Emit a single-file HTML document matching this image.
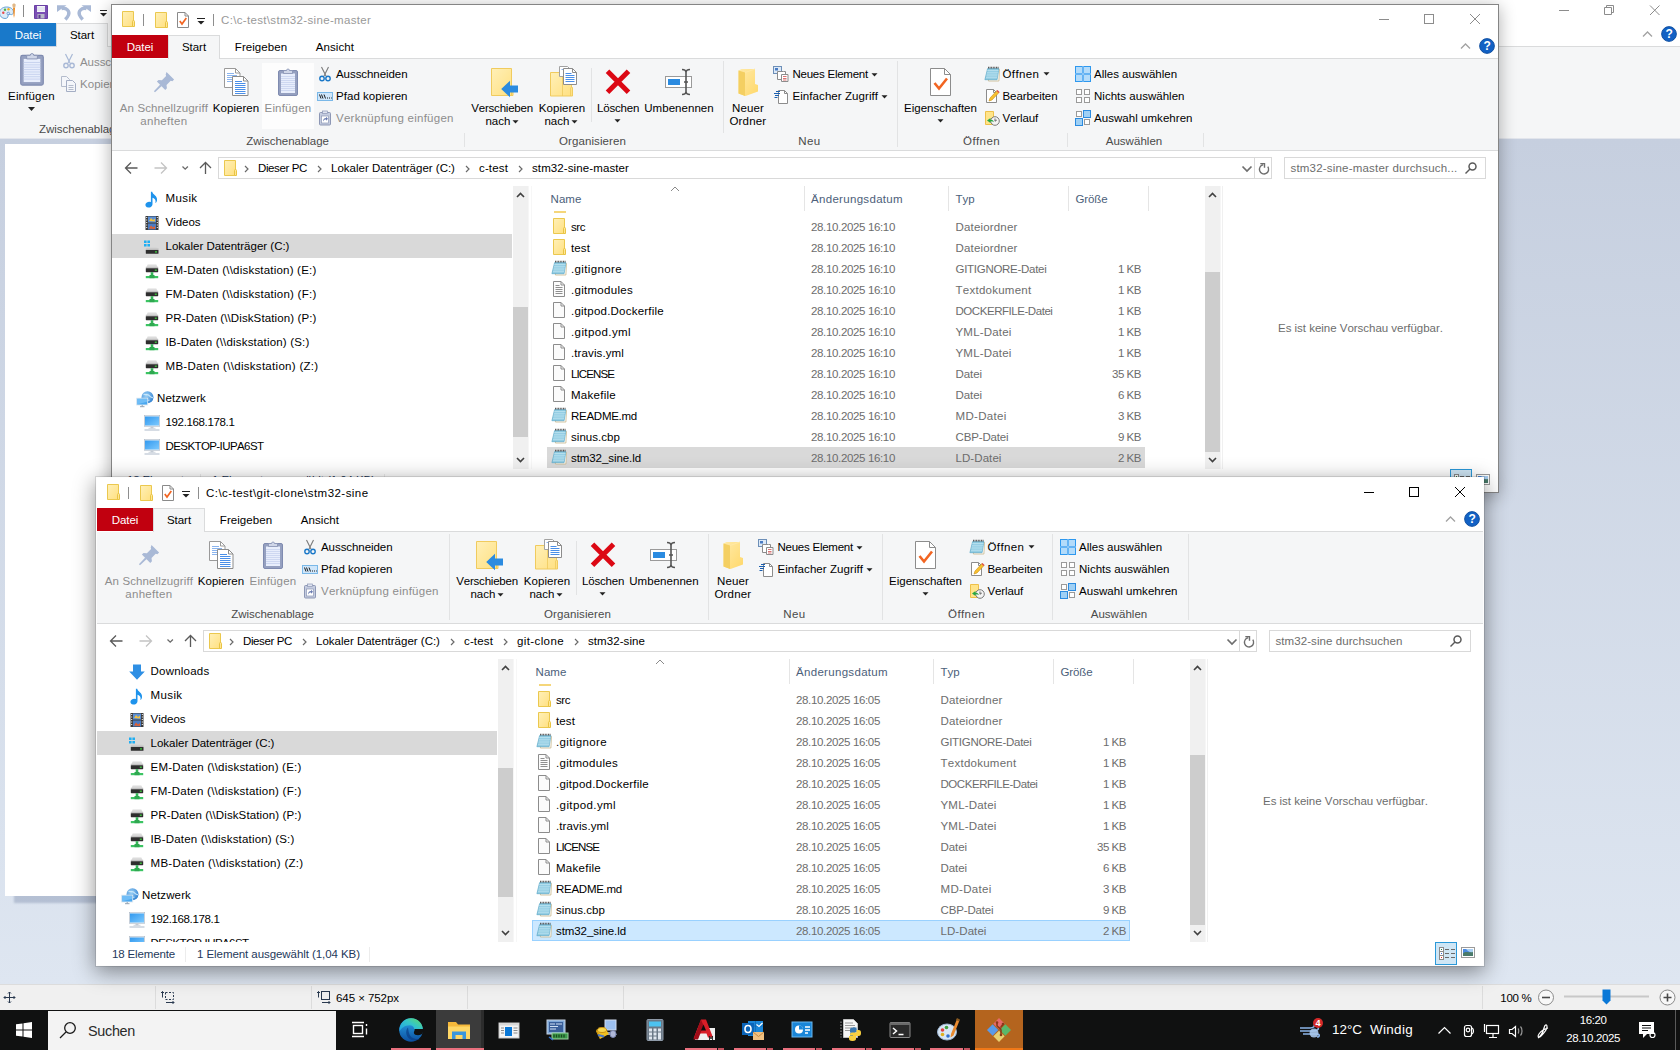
<!DOCTYPE html>
<html lang="de"><head><meta charset="utf-8"><title>Explorer</title><style>*{box-sizing:border-box;margin:0;padding:0}
html,body{width:1680px;height:1050px;overflow:hidden}
body{position:relative;font-family:"Liberation Sans",sans-serif;font-size:12px;font-kerning:none;background:#c9d2e2}
.a{position:absolute;display:block}
.t{position:absolute;white-space:pre;display:block}
.win{position:absolute;width:1388px;height:489px;background:#fff;border:1px solid #999;overflow:hidden}
svg{overflow:visible}
</style></head><body>
<svg width="0" height="0" style="position:absolute"><defs><linearGradient id="gfo" x1="0" y1="0" x2="1" y2="1"><stop offset="0" stop-color="#fff0b8"/><stop offset="1" stop-color="#ffe080"/></linearGradient><radialGradient id="gnet" cx=".4" cy=".35" r=".7"><stop offset="0" stop-color="#9fd4f8"/><stop offset="1" stop-color="#2f7fd0"/></radialGradient><linearGradient id="gpc" x1="0" y1="0" x2="1" y2="1"><stop offset="0" stop-color="#2f97ee"/><stop offset="1" stop-color="#7fcbff"/></linearGradient><linearGradient id="gnf" x1="0" y1="0" x2="1" y2="1"><stop offset="0" stop-color="#ffeaa8"/><stop offset="1" stop-color="#ffd86a"/></linearGradient></defs></svg>
<div class="a" style="left:0px;top:0px;width:1680px;height:46px;background:#fff;"></div>
<svg class="a" style="left:0;top:2px" width="112" height="20"><path d="M6.500 5c4 0 7 2 7 5 0 2-1.500 3-3 2.500-1.500-.5-2.500 0-2.500 1.500s-1 2.500-3 2.500c-3 0-5.500-2.500-5.500-5.500 0-3.500 3-6 7-6z" fill="#dcebf7" stroke="#5a9bd0" stroke-width=".9"/><circle cx="3.300" cy="10.800" r="1.200" fill="#e84a4a"/><circle cx="5" cy="7.800" r="1.200" fill="#4ab04a"/><circle cx="8.500" cy="7.300" r="1.200" fill="#f0b020"/><circle cx="8.300" cy="11.500" r="1.300" fill="none" stroke="#5a8ad0" stroke-width=".8"/><path d="M13 5.500h2l-.5 8-.5 2.500-.5-2.500z" fill="#f08a20"/><path d="M12.300 3c0-2 3.400-2 3.400 0l-.5 2.800h-2.400z" fill="#e0b888"/><path d="M23.500 3v12" stroke="#8a8a8a"/><path d="M34.500 3.500h13v13h-13z" fill="#7b4fb5" stroke="#6a40a4"/><rect x="37" y="4" width="8" height="6" fill="#f4f4fa"/><path d="M37 6h8M37 8h8" stroke="#c8cce0" stroke-width=".7"/><rect x="37.500" y="12" width="7" height="4.500" fill="#b8b8c8"/><rect x="38.500" y="12.800" width="2" height="3.500" fill="#5b3a90"/><path d="M57 3.300h9.500l-9.500 6.700z" fill="#a9b9d6"/><path d="M61.500 6.500c5-1 8.500 2.500 7 6.500-.7 1.800-1.800 3-3.200 4.500" fill="none" stroke="#a9b9d6" stroke-width="3.400"/><path d="M91 3.300h-9.500l9.500 6.700z" fill="#a9b9d6"/><path d="M86.500 6.500c-5-1-8.500 2.500-7 6.500 .7 1.800 1.800 3 3.200 4.500" fill="none" stroke="#a9b9d6" stroke-width="3.400"/><path d="M100 8.500h7" stroke="#222"/><path d="M100 11h7l-3.500 3.500z" fill="#222"/></svg>
<svg class="a" style="left:1555px;top:2px" width="112" height="18" fill="none" stroke="#8c8c8c" stroke-width="1"><path d="M4 8.500h10"/><path d="M49.500 5.500h7v7h-7zM51.500 5.500v-2h7v7h-2"/><path d="M95 3.500l9.500 9.500M104.500 3.500l-9.500 9.500"/></svg>
<svg class="a" style="left:1641.500px;top:30px" width="11" height="8"><path d="M1 6.500l4.500-4.500 4.500 4.500" fill="none" stroke="#a2a2a2" stroke-width="1.300"/></svg>
<svg class="a" style="left:1660.5px;top:26px;" width="16" height="16" viewBox="0 0 18 18"><circle cx="9" cy="9" r="8.300" fill="#1261c4" stroke="#0b4a9c"/></svg>
<span class="t" style="top:26px;line-height:16px;font-size:12px;color:#fff;letter-spacing:-0.674px;font-weight:700;left:1468.84px;width:400px;text-align:center;">?</span>
<div class="a" style="left:0px;top:23px;width:56px;height:23px;background:#1979ca;"></div>
<span class="t" style="top:27px;line-height:16px;font-size:11.52px;color:#fff;letter-spacing:-0.069px;left:-171.966px;width:400px;text-align:center;">Datei</span>
<div class="a" style="left:107px;top:46px;width:1573px;height:1px;background:#dadbdc;"></div>
<div class="a" style="left:56px;top:23px;width:52px;height:24px;background:#f5f6f7;border:1px solid #dadbdc;border-bottom:none;"></div>
<span class="t" style="top:27px;line-height:16px;font-size:11.52px;color:#000;letter-spacing:-0.056px;left:-117.972px;width:400px;text-align:center;">Start</span>
<div class="a" style="left:0px;top:47px;width:1680px;height:91px;background:#f5f6f7;"></div>
<div class="a" style="left:0px;top:138px;width:1680px;height:1px;background:#e2e5ec;"></div>
<svg class="a" style="left:12.5px;top:49.5px;" width="38" height="38" viewBox="0 0 32 32"><rect x="6.500" y="4.500" width="19" height="25" rx="1.500" fill="#95a0c0" stroke="#7f8bb0"/><rect x="9" y="7.500" width="14" height="19.500" fill="#e8eefc"/><path d="M9 10.500h14M9 12.500h14M9 14.500h14M9 16.500h14M9 18.500h14M9 20.500h14M9 22.500h14M9 24.500h14" stroke="#c6d2ee" stroke-width=".8"/><path d="M11.500 7.500v-3h3a1.500 1.500 0 0 1 3 0h3v3z" fill="#cfd6e8" stroke="#8893b4" stroke-width=".8"/></svg>
<span class="t" style="top:88px;line-height:16px;font-size:11.52px;color:#000;letter-spacing:0.165px;left:-168.583px;width:400px;text-align:center;">Einfügen</span>
<svg class="a" style="left:28px;top:106.500px" width="7" height="4"><path d="M0 0h7l-3.500 4z" fill="#222"/></svg>
<svg class="a" style="left:61px;top:53px" width="16" height="16"><path d="M4.500 1l4.500 9M11.500 1l-4.500 9" stroke="#a9b9d6" stroke-width="1.200" fill="none"/><circle cx="5" cy="12.500" r="2.200" fill="none" stroke="#a9b9d6" stroke-width="1.400"/><circle cx="11" cy="12.500" r="2.200" fill="none" stroke="#a9b9d6" stroke-width="1.400"/></svg>
<span class="t" style="top:54px;line-height:16px;font-size:11.52px;color:#8d8d8d;letter-spacing:-0.068px;left:80px;">Ausschneiden</span>
<svg class="a" style="left:60px;top:75px" width="17" height="17"><path d="M1.500 1.500h5l3 3v7h-8z" fill="#f4f6fa" stroke="#b4bccc"/><path d="M6.500 5.500h6l3 3v8h-9z" fill="#f4f6fa" stroke="#a4aec4"/><path d="M8.500 10.500h5M8.500 12.500h5M8.500 14.500h5" stroke="#b4bccc"/></svg>
<span class="t" style="top:76px;line-height:16px;font-size:11.52px;color:#8d8d8d;letter-spacing:0.023px;left:80px;">Kopieren</span>
<span class="t" style="top:121px;line-height:16px;font-size:11.52px;color:#4a4a4a;letter-spacing:-0.032px;left:39px;">Zwischenablage</span>
<div class="a" style="left:0px;top:139px;width:1680px;height:846px;background:linear-gradient(#c6cfdf,#dee6f1);"></div>
<div class="a" style="left:5px;top:144px;width:645px;height:752px;background:#fff;box-shadow:9px 7px 2px 0 rgba(70,90,130,.26);"></div>
<div class="a" style="left:0px;top:984px;width:1680px;height:26px;background:#f0f0f0;border-top:1px solid #dcdcdc;"></div>
<div class="a" style="left:155px;top:986px;width:1px;height:23px;background:#dcdcdc;"></div>
<div class="a" style="left:311px;top:986px;width:1px;height:23px;background:#dcdcdc;"></div>
<div class="a" style="left:467px;top:986px;width:1px;height:23px;background:#dcdcdc;"></div>
<div class="a" style="left:623px;top:986px;width:1px;height:23px;background:#dcdcdc;"></div>
<div class="a" style="left:1482px;top:986px;width:1px;height:23px;background:#dcdcdc;"></div>
<svg class="a" style="left:3px;top:991px" width="13" height="13" fill="none" stroke="#2a3a50" stroke-width="1"><path d="M6.500 1v11M1 6.500h11"/><path d="M5 2.500l1.500-1.500 1.500 1.500M5 10.500l1.500 1.500 1.500-1.500M2.500 5l-1.500 1.500 1.500 1.500M10.500 5l1.500 1.500-1.500 1.500"/></svg>
<svg class="a" style="left:161px;top:990px" width="15" height="14" fill="none" stroke="#2a3a50" stroke-width="1"><rect x="4.500" y="2.500" width="8" height="7" stroke-dasharray="2 1.500"/><path d="M1.500 1.500v6M5 12.500h8M0 3l1.500-1.500 1.500 1.500M11.500 11l1.500 1.500-1.500 1.500"/></svg>
<svg class="a" style="left:317px;top:990px" width="15" height="14" fill="none" stroke="#2a3a50" stroke-width="1"><rect x="4.500" y="1.500" width="8" height="8"/><path d="M1.500 1.500v6M5 12.500h8M0 3l1.500-1.500 1.500 1.500M11.500 11l1.500 1.500-1.500 1.500"/></svg>
<span class="t" style="top:990px;line-height:16px;font-size:11.52px;color:#000;letter-spacing:-0.067px;left:336px;">645 × 752px</span>
<span class="t" style="top:990px;line-height:16px;font-size:11.52px;color:#000;letter-spacing:-0.333px;left:1131.33px;width:400px;text-align:right;">100 %</span>
<svg class="a" style="left:1538px;top:988.500px" width="142" height="17" fill="none"><circle cx="8" cy="8.500" r="7.500" fill="#f8f8f8" stroke="#8a8a8a"/><path d="M4 8.500h8" stroke="#4a4a4a" stroke-width="1.600"/><path d="M26 7.500h85" stroke="#c8c8c8" stroke-width="2"/><path d="M64.500 .5h8v11l-4 4-4-4z" fill="#0a78d7"/><circle cx="129.500" cy="8.500" r="7.500" fill="#f8f8f8" stroke="#8a8a8a"/><path d="M125.500 8.500h8M129.500 4.500v8" stroke="#4a4a4a" stroke-width="1.600"/></svg>
<div class="win" id="w1" style="left:111px;top:4px;border-color:#858585;box-shadow:0 3px 16px 0 rgba(0,0,0,.32)"><svg class="a" style="left:8px;top:6px;" width="16" height="16" viewBox="0 0 16 16"><path d="M2.500 .5h11v15h-11z" fill="url(#gfo)" stroke="#ebc84e"/><path d="M12.500 15.500v-5a1 1 0 0 1 2 0v5z" fill="#ffe694" stroke="#e9c444"/></svg>
<div class="a" style="left:31px;top:8.5px;width:1px;height:12px;background:#8e8e8e;"></div>
<svg class="a" style="left:41px;top:7px;" width="16" height="16" viewBox="0 0 16 16"><path d="M2.500 .5h11v15h-11z" fill="url(#gfo)" stroke="#ebc84e"/><path d="M12.500 15.500v-5a1 1 0 0 1 2 0v5z" fill="#ffe694" stroke="#e9c444"/></svg>
<svg class="a" style="left:63px;top:7px;" width="16" height="16" viewBox="0 0 16 16"><path d="M2.5 .5h7.500l3.500 3.500v11.500h-11z" fill="#fff" stroke="#8a8a8a"/><path d="M10 .5v3.500h3.500" fill="none" stroke="#8a8a8a"/><path d="M4.800 9l2.200 3 4.300-6" fill="none" stroke="#f26522" stroke-width="1.700"/></svg>
<svg class="a" style="left:84px;top:12px" width="10" height="9"><path d="M1 1.500h8" stroke="#222" stroke-width="1"/><path d="M1.500 4h7l-3.500 3.500z" fill="#222"/></svg>
<div class="a" style="left:101px;top:8.5px;width:1px;height:12px;background:#8e8e8e;"></div>
<span class="t" style="top:7px;line-height:16px;font-size:11.52px;color:#999;letter-spacing:0.327px;left:109px;">C:\c-test\stm32-sine-master</span>
<svg class="a" style="left:1262px;top:4px" width="112" height="20" fill="none" stroke="#8c8c8c" stroke-width="1"><path d="M5 10.500h10"/><rect x="50.500" y="5.500" width="9" height="9"/><path d="M96 5l10 10M106 5l-10 10"/></svg>
<div class="a" style="left:0px;top:30px;width:56px;height:23px;background:#c1000f;"></div>
<span class="t" style="top:34px;line-height:16px;font-size:11.52px;color:#fff;letter-spacing:-0.069px;left:-171.966px;width:400px;text-align:center;">Datei</span>
<div class="a" style="left:56px;top:53px;width:1330px;height:1px;background:#dadbdc;"></div>
<div class="a" style="left:56px;top:30px;width:52px;height:24px;background:#f5f6f7;border:1px solid #dadbdc;border-bottom:none;"></div>
<span class="t" style="top:34px;line-height:16px;font-size:11.52px;color:#000;letter-spacing:-0.056px;left:-117.972px;width:400px;text-align:center;">Start</span>
<span class="t" style="top:34px;line-height:16px;font-size:11.52px;color:#000;letter-spacing:0.047px;left:-51.0237px;width:400px;text-align:center;">Freigeben</span>
<span class="t" style="top:34px;line-height:16px;font-size:11.52px;color:#000;letter-spacing:0.075px;left:22.9627px;width:400px;text-align:center;">Ansicht</span>
<svg class="a" style="left:1348px;top:37px" width="11" height="8"><path d="M1 6.500l4.500-4.500 4.500 4.500" fill="none" stroke="#a2a2a2" stroke-width="1.300"/></svg>
<svg class="a" style="left:1366.5px;top:33px;" width="16" height="16" viewBox="0 0 18 18"><circle cx="9" cy="9" r="8.300" fill="#1261c4" stroke="#0b4a9c"/></svg>
<span class="t" style="top:33px;line-height:16px;font-size:12px;color:#fff;letter-spacing:-0.674px;font-weight:700;left:1174.84px;width:400px;text-align:center;">?</span>
<div class="a" style="left:0px;top:54px;width:1386px;height:91px;background:#f5f6f7;"></div>
<div class="a" style="left:0px;top:145px;width:1386px;height:1px;background:#dadbdc;"></div>
<svg class="a" style="left:36px;top:61px;" width="32" height="32" viewBox="0 0 32 32"><g fill="#a9b9d6" transform="translate(16 16) scale(.84) translate(-16 -16)"><path d="M19 4l9 9-2 2-2-.5-5 5 .5 4-2 2-10-10 2-2 4 .5 5-5-.5-2z"/><path d="M11.500 19l1.800 1.800-8 7.500-1.300-1.300z"/></g></svg>
<span class="t" style="top:95px;line-height:16px;font-size:11.52px;color:#8d8d8d;letter-spacing:0.109px;left:-148.055px;width:400px;text-align:center;">An Schnellzugriff</span>
<span class="t" style="top:108px;line-height:16px;font-size:11.52px;color:#8d8d8d;letter-spacing:0.307px;left:-148.154px;width:400px;text-align:center;">anheften</span>
<svg class="a" style="left:108px;top:61px;" width="32" height="32" viewBox="0 0 32 32"><path d="M4.500 2.500h11l4.500 4.500v14.500h-15.500z" fill="#fff" stroke="#9a9a9a"/><path d="M15.500 2.500v4.500h4.500" fill="none" stroke="#9a9a9a"/><path d="M7 7.500h7M7 9.500h10M7 11.500h5M7 13.500h5M7 15.500h5" stroke="#8ab4ee" stroke-width="1"/><path d="M12.500 10.500h11l4.500 4.500v14.500h-15.500z" fill="#fff" stroke="#8c8c8c"/><path d="M23.500 10.500v4.500h4.500" fill="none" stroke="#8c8c8c"/><path d="M15 15.500h7M15 17.500h10.500M15 19.500h10.500M15 21.500h10.500M15 23.500h10.500M15 25.500h10.500M15 27.500h10.500" stroke="#4a8fe8" stroke-width="1"/></svg>
<span class="t" style="top:95px;line-height:16px;font-size:11.52px;color:#000;letter-spacing:0.023px;left:-76.0116px;width:400px;text-align:center;">Kopieren</span>
<div class="a" style="left:150px;top:58px;width:52px;height:66px;background:#fdfdfd;"></div>
<svg class="a" style="left:160px;top:61px;" width="32" height="32" viewBox="0 0 32 32"><rect x="6.500" y="4.500" width="19" height="25" rx="1.500" fill="#95a0c0" stroke="#7f8bb0"/><rect x="9" y="7.500" width="14" height="19.500" fill="#e8eefc"/><path d="M9 10.500h14M9 12.500h14M9 14.500h14M9 16.500h14M9 18.500h14M9 20.500h14M9 22.500h14M9 24.500h14" stroke="#c6d2ee" stroke-width=".8"/><path d="M11.500 7.500v-3h3a1.500 1.500 0 0 1 3 0h3v3z" fill="#cfd6e8" stroke="#8893b4" stroke-width=".8"/></svg>
<span class="t" style="top:95px;line-height:16px;font-size:11.52px;color:#8d8d8d;letter-spacing:0.165px;left:-24.0826px;width:400px;text-align:center;">Einfügen</span>
<svg class="a" style="left:205px;top:61px;" width="16" height="16" viewBox="0 0 16 16"><path d="M4.500 1l4.500 9M11.500 1l-4.500 9" stroke="#7a7a7a" stroke-width="1.100" fill="none"/><circle cx="5" cy="12.500" r="2.200" fill="none" stroke="#1b78c8" stroke-width="1.400"/><circle cx="11" cy="12.500" r="2.200" fill="none" stroke="#1b78c8" stroke-width="1.400"/></svg>
<span class="t" style="top:61px;line-height:16px;font-size:11.52px;color:#000;letter-spacing:-0.068px;left:224px;">Ausschneiden</span>
<svg class="a" style="left:205px;top:83px;" width="16" height="16" viewBox="0 0 16 16"><rect x=".5" y="4.500" width="15" height="8" fill="#cfe6fa" stroke="#7ab8e8"/><path d="M2.500 6.500l1.500 4M4.500 6.500l1.500 4M7 6.500l1.500 4" stroke="#1a1a1a" stroke-width="1"/><path d="M10 10h1M12 10h1M14 10h.8" stroke="#1a1a1a" stroke-width="1.200"/></svg>
<span class="t" style="top:83px;line-height:16px;font-size:11.52px;color:#000;letter-spacing:0.035px;left:224px;">Pfad kopieren</span>
<svg class="a" style="left:205px;top:105px;" width="16" height="16" viewBox="0 0 16 16"><rect x="2.500" y="2.500" width="11" height="12.500" rx="1" fill="#c5cde0" stroke="#8d97b5"/><rect x="5.500" y="1" width="5" height="2.500" fill="#dfe4f0" stroke="#8d97b5" stroke-width=".7"/><rect x="4.500" y="6" width="7" height="7" fill="#fff" stroke="#8d97b5" stroke-width=".7"/><path d="M6 11.500c0-2.500 1.500-3.500 3-3.500v-1.200l2 2-2 2v-1.200c-1 0-2 .3-3 1.900z" fill="#6a7cb0"/></svg>
<span class="t" style="top:105px;line-height:16px;font-size:11.52px;color:#8d8d8d;letter-spacing:0.253px;left:224px;">Verknüpfung einfügen</span>
<span class="t" style="top:128px;line-height:16px;font-size:11.52px;color:#4a4a4a;letter-spacing:-0.032px;left:-24.4839px;width:400px;text-align:center;">Zwischenablage</span>
<div class="a" style="left:352px;top:128px;width:1px;height:14px;background:#e2e3e4;"></div>
<svg class="a" style="left:375.5px;top:61px;" width="32" height="32" viewBox="0 0 32 32"><path d="M3.500 2.500h20v19h1.500v8h-21.500z" fill="url(#gfo)" stroke="#f0cb5e"/><path d="M23.500 21.500v8" stroke="#f0c95a"/><path d="M13.200 23l8.800-8.200v4.700h8v7h-8v4.700z" fill="#2b8be0"/></svg>
<span class="t" style="top:95px;line-height:16px;font-size:11.52px;color:#000;letter-spacing:-0.226px;left:190.113px;width:400px;text-align:center;">Verschieben</span>
<span class="t" style="top:108px;line-height:16px;font-size:11.52px;color:#000;letter-spacing:-0.045px;left:373.5px;">nach</span>
<svg class="a" style="left:400px;top:114.5px" width="7" height="4"><path d="M.5 .3h6l-3 3.200z" fill="#222"/></svg>
<svg class="a" style="left:434px;top:61px;" width="32" height="32" viewBox="0 0 32 32"><path d="M4.500 6.500h21v15h1v8.500h-22z" fill="url(#gfo)" stroke="#f0cb5e"/><path d="M16.500 6.500v23.500M24.500 21.500v8.500" stroke="#f0cb5e" opacity=".8"/><path d="M13.500 .5h8l3 3v7h-11z" fill="#fff" stroke="#a2a2a2"/><path d="M15.500 3.500h4" stroke="#8ab4ee"/><path d="M17.500 2.500h9l4 4v12h-13z" fill="#fff" stroke="#8c8c8c"/><path d="M26.500 2.500v4h4" fill="none" stroke="#8c8c8c"/><path d="M19.500 7.500h6M19.500 9.500h9M19.500 11.500h9M19.500 13.500h9M19.500 15.500h9" stroke="#4a8fe8" stroke-width="1"/></svg>
<span class="t" style="top:95px;line-height:16px;font-size:11.52px;color:#000;letter-spacing:0.023px;left:249.988px;width:400px;text-align:center;">Kopieren</span>
<span class="t" style="top:108px;line-height:16px;font-size:11.52px;color:#000;letter-spacing:-0.045px;left:432.5px;">nach</span>
<svg class="a" style="left:459px;top:114.5px" width="7" height="4"><path d="M.5 .3h6l-3 3.200z" fill="#222"/></svg>
<div class="a" style="left:479px;top:63px;width:1px;height:54px;background:#e2e3e4;"></div>
<svg class="a" style="left:490px;top:61px;" width="32" height="32" viewBox="0 0 32 32"><path d="M5.500 5.200l21 21M26.500 5.200l-21 21" stroke="#dc0814" stroke-width="5" fill="none"/></svg>
<span class="t" style="top:95px;line-height:16px;font-size:11.52px;color:#000;letter-spacing:-0.215px;left:306.107px;width:400px;text-align:center;">Löschen</span>
<svg class="a" style="left:502px;top:114px" width="7" height="4"><path d="M.5 .3h6l-3 3.200z" fill="#222"/></svg>
<svg class="a" style="left:551px;top:61px;" width="32" height="32" viewBox="0 0 32 32"><rect x="2.500" y="10.500" width="26" height="11" fill="#fff" stroke="#9a9a9a"/><rect x="5" y="13" width="12" height="6" fill="#2b8be0"/><path d="M19 3.500c3 0 4 1 4 3v19c0 2-1 3-4 3M27 3.500c-3 0-4 1-4 3v19c0 2 1 3 4 3M21 16h4" stroke="#555" stroke-width="1.600" fill="none"/></svg>
<span class="t" style="top:95px;line-height:16px;font-size:11.52px;color:#000;letter-spacing:0.038px;left:366.981px;width:400px;text-align:center;">Umbenennen</span>
<span class="t" style="top:128px;line-height:16px;font-size:11.52px;color:#4a4a4a;letter-spacing:0.087px;left:280.456px;width:400px;text-align:center;">Organisieren</span>
<div class="a" style="left:611px;top:56px;width:1px;height:72px;background:#e2e3e4;"></div>
<svg class="a" style="left:620px;top:61px;" width="32" height="32" viewBox="0 0 32 32"><path d="M6.500 4.500l3-1.500h13.500v15l3 1v6.500l-12.500 4.500-7-2.500z" fill="url(#gnf)"/><path d="M6.500 4.500l6.500 2v23.500l-6.500-2.500z" fill="#f4cf62"/><path d="M13 6.500l10-3.500" stroke="#ffe9a6" fill="none"/></svg>
<span class="t" style="top:95px;line-height:16px;font-size:11.52px;color:#000;letter-spacing:0.125px;left:435.938px;width:400px;text-align:center;">Neuer</span>
<span class="t" style="top:108px;line-height:16px;font-size:11.52px;color:#000;letter-spacing:0.191px;left:435.904px;width:400px;text-align:center;">Ordner</span>
<svg class="a" style="left:661px;top:61px;" width="16" height="16" viewBox="0 0 16 16"><rect x=".5" y=".5" width="8" height="7" fill="#dce9f7" stroke="#6d8fb8"/><rect x="2" y="2" width="3" height="2.500" fill="#4a7cc4"/><path d="M4.500 5.500h6l2 0v8h-8z" fill="#fff" stroke="#8c8c8c"/><path d="M8.500 8.500h6.500v7h-6.500z" fill="#fff" stroke="#8c8c8c"/><path d="M10 10.500h3.500M10 12.500h3.500M10 14h3.500" stroke="#d05050" stroke-width=".8"/></svg>
<span class="t" style="top:61px;line-height:16px;font-size:11.52px;color:#000;letter-spacing:-0.251px;left:680.5px;">Neues Element</span>
<svg class="a" style="left:759px;top:67.5px" width="7" height="4"><path d="M.5 .3h6l-3 3.200z" fill="#222"/></svg>
<svg class="a" style="left:661px;top:83px;" width="16" height="16" viewBox="0 0 16 16"><path d="M5.500 2.500h6l3 3v10h-9z" fill="#fff" stroke="#8c8c8c"/><path d="M11.500 2.500v3h3" fill="none" stroke="#8c8c8c"/><path d="M1 5.500h6M2 7.500h4M3 3.500h4M1.500 9.500h3" stroke="#1b5fb0" stroke-width="1"/></svg>
<span class="t" style="top:83px;line-height:16px;font-size:11.52px;color:#000;letter-spacing:0.064px;left:680.5px;">Einfacher Zugriff</span>
<svg class="a" style="left:768.5px;top:89.5px" width="7" height="4"><path d="M.5 .3h6l-3 3.200z" fill="#222"/></svg>
<span class="t" style="top:128px;line-height:16px;font-size:11.52px;color:#4a4a4a;letter-spacing:0.289px;left:497.356px;width:400px;text-align:center;">Neu</span>
<div class="a" style="left:785px;top:56px;width:1px;height:86px;background:#e2e3e4;"></div>
<svg class="a" style="left:811.5px;top:61px;" width="32" height="32" viewBox="0 0 32 32"><path d="M6.500 2.500h14l6 6v21h-20z" fill="#fff" stroke="#8c8c8c"/><path d="M20.500 2.500v6h6" fill="none" stroke="#8c8c8c"/><path d="M10.500 17l4.500 5.500 8-10" fill="none" stroke="#f26522" stroke-width="2.600"/></svg>
<span class="t" style="top:95px;line-height:16px;font-size:11.52px;color:#000;letter-spacing:-0.016px;left:628.508px;width:400px;text-align:center;">Eigenschaften</span>
<svg class="a" style="left:825px;top:114px" width="7" height="4"><path d="M.5 .3h6l-3 3.200z" fill="#222"/></svg>
<svg class="a" style="left:871.5px;top:61px;" width="16" height="16" viewBox="0 0 16 16"><path d="M5.200 3.500h10.300l-.6 11.500h-10.500z" fill="#fdfdfd" stroke="#c9b78c" stroke-width=".8"/><path d="M3.600 2.600h11.300l-1.800 11.100h-12.200z" fill="#8ecbe2"/><path d="M3.600 2.600h11.300l-1.800 11.100h-12.200z" fill="none" stroke="#5fa9c8" stroke-width=".7"/><path d="M3.300 4.500h11.200M3 6.300h11.200M2.600 8.100h11.200M2.300 9.900h11.200M2 11.700h11.200" stroke="#c4e6f2" stroke-width=".7"/><path d="M4 1.700h10.600" stroke="#4a4a4a" stroke-width="1.700" stroke-dasharray=".9 .7"/></svg>
<span class="t" style="top:61px;line-height:16px;font-size:11.52px;color:#000;letter-spacing:0.386px;left:890.5px;">Öffnen</span>
<svg class="a" style="left:931px;top:67px" width="7" height="4"><path d="M.5 .3h6l-3 3.200z" fill="#222"/></svg>
<svg class="a" style="left:872px;top:83px;" width="16" height="16" viewBox="0 0 16 16"><path d="M2.500 1.500h7l3 3v10h-10z" fill="#fff" stroke="#8c8c8c"/><path d="M9.500 1.500v3h3" fill="none" stroke="#8c8c8c"/><path d="M5 13l1-3 7-7.500 2 2-7 7.500z" fill="#f8c030" stroke="#c89018" stroke-width=".6"/><path d="M13 2.500l2 2" stroke="#e05050" stroke-width="1.500"/></svg>
<span class="t" style="top:83px;line-height:16px;font-size:11.52px;color:#000;letter-spacing:-0.072px;left:890.5px;">Bearbeiten</span>
<svg class="a" style="left:872px;top:105px;" width="16" height="16" viewBox="0 0 16 16"><path d="M1.500 1.500h8v9h1v4h-9z" fill="#ffe48a" stroke="#eec04a"/><circle cx="11" cy="11" r="4.300" fill="#f4f4f4" stroke="#7a7a7a"/><path d="M11 8.500v2.700l1.800-1.200" stroke="#555" fill="none" stroke-width=".9"/><path d="M3 10.500l3.500-2.500v1.800c2 0 3 .8 3.500 2.500-1-.8-2-1-3.500-1v1.700z" fill="#28a745"/></svg>
<span class="t" style="top:105px;line-height:16px;font-size:11.52px;color:#000;letter-spacing:-0.143px;left:890.5px;">Verlauf</span>
<span class="t" style="top:128px;line-height:16px;font-size:11.52px;color:#4a4a4a;letter-spacing:0.386px;left:669.557px;width:400px;text-align:center;">Öffnen</span>
<div class="a" style="left:955px;top:128px;width:1px;height:14px;background:#e2e3e4;"></div>
<svg class="a" style="left:963px;top:61px;" width="16" height="16" viewBox="0 0 16 16"><g fill="#b3dbfa" stroke="#2d98ef"><rect x=".5" y=".5" width="7" height="7"/><rect x="8.500" y=".5" width="7" height="7"/><rect x=".5" y="8.500" width="7" height="7"/><rect x="8.500" y="8.500" width="7" height="7"/></g><path d="M8 0v16M0 8h16" stroke="#e8f4fe" stroke-width=".6"/></svg>
<span class="t" style="top:61px;line-height:16px;font-size:11.52px;color:#000;letter-spacing:-0.013px;left:982px;">Alles auswählen</span>
<svg class="a" style="left:963px;top:83px;" width="16" height="16" viewBox="0 0 16 16"><g fill="#fff" stroke="#9a9a9a"><rect x="1.500" y="1.500" width="5" height="5"/><rect x="9.500" y="1.500" width="5" height="5"/><rect x="1.500" y="9.500" width="5" height="5"/><rect x="9.500" y="9.500" width="5" height="5"/></g></svg>
<span class="t" style="top:83px;line-height:16px;font-size:11.52px;color:#000;letter-spacing:0.016px;left:982px;">Nichts auswählen</span>
<svg class="a" style="left:963px;top:105px;" width="16" height="16" viewBox="0 0 16 16"><g stroke="#9a9a9a" fill="#fff"><rect x="1.500" y="1.500" width="5" height="5"/><rect x="9.500" y="9.500" width="5" height="5"/></g><g fill="#9fd0f5" stroke="#2b8be0"><rect x="8.500" y=".5" width="7" height="7"/><rect x=".5" y="8.500" width="7" height="7"/></g></svg>
<span class="t" style="top:105px;line-height:16px;font-size:11.52px;color:#000;letter-spacing:0.036px;left:982px;">Auswahl umkehren</span>
<span class="t" style="top:128px;line-height:16px;font-size:11.52px;color:#4a4a4a;letter-spacing:0.021px;left:821.989px;width:400px;text-align:center;">Auswählen</span>
<div class="a" style="left:1091px;top:128px;width:1px;height:14px;background:#e2e3e4;"></div>
<svg class="a" style="left:12px;top:156px" width="90" height="14" fill="none" stroke-width="1.300"><path d="M1.500 7h12M7 1.500l-5.500 5.500 5.500 5.500" stroke="#5a5a5a"/><path d="M30.500 7h12M37 1.500l5.500 5.500-5.500 5.500" stroke="#c4c4c4"/><path d="M58.500 5.500l2.700 2.700 2.700-2.700" stroke="#6a6a6a"/><path d="M81.500 13v-11.500M76 7l5.500-5.500 5.500 5.500" stroke="#5a5a5a"/></svg>
<div class="a" style="left:106px;top:152px;width:1037px;height:22px;background:#fff;border:1px solid #d9d9d9;"></div>
<div class="a" style="left:1142px;top:152px;width:18px;height:22px;background:#fff;border:1px solid #d9d9d9;"></div>
<svg class="a" style="left:109.5px;top:154.5px;" width="16" height="16" viewBox="0 0 16 16"><path d="M2.500 .5h11v15h-11z" fill="url(#gfo)" stroke="#ebc84e"/><path d="M12.500 15.500v-5a1 1 0 0 1 2 0v5z" fill="#ffe694" stroke="#e9c444"/></svg>
<svg class="a" style="left:131.5px;top:159.5px" width="6" height="8"><path d="M1 1l3 3-3 3" fill="none" stroke="#6a6a6a" stroke-width="1.200"/></svg>
<span class="t" style="top:155px;line-height:16px;font-size:11.52px;color:#000;letter-spacing:-0.388px;left:146px;">Dieser PC</span>
<svg class="a" style="left:204.5px;top:159.5px" width="6" height="8"><path d="M1 1l3 3-3 3" fill="none" stroke="#6a6a6a" stroke-width="1.200"/></svg>
<span class="t" style="top:155px;line-height:16px;font-size:11.52px;color:#000;letter-spacing:-0.009px;left:219px;">Lokaler Datenträger (C:)</span>
<svg class="a" style="left:352.5px;top:159.5px" width="6" height="8"><path d="M1 1l3 3-3 3" fill="none" stroke="#6a6a6a" stroke-width="1.200"/></svg>
<span class="t" style="top:155px;line-height:16px;font-size:11.52px;color:#000;letter-spacing:0.139px;left:367px;">c-test</span>
<svg class="a" style="left:405.5px;top:159.5px" width="6" height="8"><path d="M1 1l3 3-3 3" fill="none" stroke="#6a6a6a" stroke-width="1.200"/></svg>
<span class="t" style="top:155px;line-height:16px;font-size:11.52px;color:#000;letter-spacing:0.095px;left:420px;">stm32-sine-master</span>
<svg class="a" style="left:1129px;top:159px" width="12" height="9"><path d="M1.500 2.500l4.500 4.500 4.500-4.500" fill="none" stroke="#6e6e6e" stroke-width="1.700"/></svg>
<svg class="a" style="left:1144px;top:156px" width="16" height="16" fill="none" stroke="#6e6e6e" stroke-width="1.400"><path d="M11.800 5.700A4.600 4.600 0 1 1 7.200 3.800"/><path d="M4.300 2.600h4.200v4.100"/></svg>
<div class="a" style="left:1172px;top:152px;width:202px;height:22px;background:#fff;border:1px solid #d9d9d9;"></div>
<span class="t" style="top:155px;line-height:16px;font-size:11.52px;color:#6d6d6d;letter-spacing:0.189px;left:1178.5px;">stm32-sine-master durchsuch...</span>
<svg class="a" style="left:1352px;top:156px" width="14" height="14" fill="none" stroke="#5a5a5a" stroke-width="1.500"><circle cx="8.500" cy="5.500" r="3.500"/><path d="M6 8l-4.500 4.500"/></svg>
<div class="a" style="left:0;top:181px;width:401px;height:283px;overflow:hidden"><div class="a" style="left:0;top:-181px">
<svg class="a" style="left:32px;top:185.5px;" width="16" height="16" viewBox="0 0 16 16"><path d="M8.200 .8c.5 3 5.500 3.800 4.800 8.600-.3 1.400-1 2.200-1.700 2.700 1-2.900-.6-4.800-2.800-5.300v6.500a3.600 2.900 -15 1 1-1.600-2.300v-10.200z" fill="#1e93ec"/></svg>
<span class="t" style="top:185px;line-height:16px;font-size:11.52px;color:#000;letter-spacing:0.384px;left:53.5px;">Musik</span>
<svg class="a" style="left:32px;top:209.5px;" width="16" height="16" viewBox="0 0 16 16"><rect x="1.5" y="1" width="13" height="14" fill="#3a3a3a"/><rect x="4" y="1.500" width="8" height="6" fill="#5b8fd6"/><rect x="4" y="8.500" width="8" height="6" fill="#4a7cc4"/><path d="M5 6l2-3 2 2 2-1.500v3z" fill="#f0c040"/><path d="M5 13.500l2-3 2 2 2-1.500v3z" fill="#e06030"/><path d="M2.200 2.500h1M2.200 5h1M2.200 7.500h1M2.200 10h1M2.200 12.500h1M12.800 2.500h1M12.800 5h1M12.800 7.500h1M12.800 10h1M12.800 12.500h1" stroke="#fff" stroke-width="1.200"/></svg>
<span class="t" style="top:209px;line-height:16px;font-size:11.52px;color:#000;letter-spacing:-0.037px;left:53.5px;">Videos</span>
<div class="a" style="left:0px;top:229px;width:400px;height:24px;background:#d9d9d9;"></div>
<svg class="a" style="left:32px;top:233.5px;" width="16" height="16" viewBox="0 0 16 16"><path d="M2.500 9.500l1-1.500h9l1 1.500z" fill="#d5d5d5"/><rect x="1.800" y="9.500" width="12.700" height="2" fill="#bdbdbd"/><rect x="1.800" y="11" width="12.700" height="3.800" rx=".6" fill="#2e2e2e"/><rect x="11" y="12.300" width="2" height="1.200" fill="#3fdc3f"/><path d="M0 1.500h2.600v2.600h-2.600zM3.400 1.500h2.600v2.600h-2.600zM0 4.900h2.600v2.600h-2.600zM3.400 4.900h2.600v2.600h-2.600z" fill="#20aef2"/></svg>
<span class="t" style="top:233px;line-height:16px;font-size:11.52px;color:#000;letter-spacing:-0.009px;left:53.5px;">Lokaler Datenträger (C:)</span>
<svg class="a" style="left:32px;top:257.5px;" width="16" height="16" viewBox="0 0 16 16"><path d="M2.500 4l1.200-2.500h8.600l1.200 2.500z" fill="#dcdcdc"/><rect x="1.800" y="3.800" width="12.400" height="1.800" fill="#c2c2c2"/><rect x="1.800" y="5.200" width="12.400" height="4" rx=".6" fill="#2e2e2e"/><rect x="10.800" y="6.600" width="2" height="1.200" fill="#3fdc3f"/><path d="M6.700 9.200h2.600v3h-2.600z" fill="#35b558"/><path d="M1.800 13h12.400v2.200h-12.400z" fill="#3cc463"/><path d="M5.500 12h5v3.200h-5z" fill="#2fa850"/></svg>
<span class="t" style="top:257px;line-height:16px;font-size:11.52px;color:#000;letter-spacing:0.196px;left:53.5px;">EM-Daten (\\diskstation) (E:)</span>
<svg class="a" style="left:32px;top:281.5px;" width="16" height="16" viewBox="0 0 16 16"><path d="M2.500 4l1.200-2.500h8.600l1.200 2.500z" fill="#dcdcdc"/><rect x="1.800" y="3.800" width="12.400" height="1.800" fill="#c2c2c2"/><rect x="1.800" y="5.200" width="12.400" height="4" rx=".6" fill="#2e2e2e"/><rect x="10.800" y="6.600" width="2" height="1.200" fill="#3fdc3f"/><path d="M6.700 9.200h2.600v3h-2.600z" fill="#35b558"/><path d="M1.800 13h12.400v2.200h-12.400z" fill="#3cc463"/><path d="M5.500 12h5v3.200h-5z" fill="#2fa850"/></svg>
<span class="t" style="top:281px;line-height:16px;font-size:11.52px;color:#000;letter-spacing:0.241px;left:53.5px;">FM-Daten (\\diskstation) (F:)</span>
<svg class="a" style="left:32px;top:305.5px;" width="16" height="16" viewBox="0 0 16 16"><path d="M2.500 4l1.200-2.500h8.600l1.200 2.500z" fill="#dcdcdc"/><rect x="1.800" y="3.800" width="12.400" height="1.800" fill="#c2c2c2"/><rect x="1.800" y="5.200" width="12.400" height="4" rx=".6" fill="#2e2e2e"/><rect x="10.800" y="6.600" width="2" height="1.200" fill="#3fdc3f"/><path d="M6.700 9.200h2.600v3h-2.600z" fill="#35b558"/><path d="M1.800 13h12.400v2.200h-12.400z" fill="#3cc463"/><path d="M5.500 12h5v3.200h-5z" fill="#2fa850"/></svg>
<span class="t" style="top:305px;line-height:16px;font-size:11.52px;color:#000;letter-spacing:0.108px;left:53.5px;">PR-Daten (\\DiskStation) (P:)</span>
<svg class="a" style="left:32px;top:329.5px;" width="16" height="16" viewBox="0 0 16 16"><path d="M2.500 4l1.200-2.500h8.600l1.200 2.500z" fill="#dcdcdc"/><rect x="1.800" y="3.800" width="12.400" height="1.800" fill="#c2c2c2"/><rect x="1.800" y="5.200" width="12.400" height="4" rx=".6" fill="#2e2e2e"/><rect x="10.800" y="6.600" width="2" height="1.200" fill="#3fdc3f"/><path d="M6.700 9.200h2.600v3h-2.600z" fill="#35b558"/><path d="M1.800 13h12.400v2.200h-12.400z" fill="#3cc463"/><path d="M5.500 12h5v3.200h-5z" fill="#2fa850"/></svg>
<span class="t" style="top:329px;line-height:16px;font-size:11.52px;color:#000;letter-spacing:0.175px;left:53.5px;">IB-Daten (\\diskstation) (S:)</span>
<svg class="a" style="left:32px;top:353.5px;" width="16" height="16" viewBox="0 0 16 16"><path d="M2.500 4l1.200-2.500h8.600l1.200 2.500z" fill="#dcdcdc"/><rect x="1.800" y="3.800" width="12.400" height="1.800" fill="#c2c2c2"/><rect x="1.800" y="5.200" width="12.400" height="4" rx=".6" fill="#2e2e2e"/><rect x="10.800" y="6.600" width="2" height="1.200" fill="#3fdc3f"/><path d="M6.700 9.200h2.600v3h-2.600z" fill="#35b558"/><path d="M1.800 13h12.400v2.200h-12.400z" fill="#3cc463"/><path d="M5.500 12h5v3.200h-5z" fill="#2fa850"/></svg>
<span class="t" style="top:353px;line-height:16px;font-size:11.52px;color:#000;letter-spacing:0.287px;left:53.5px;">MB-Daten (\\diskstation) (Z:)</span>
<svg class="a" style="left:23.5px;top:385.5px;" width="18" height="16" viewBox="0 0 18 16"><circle cx="11.500" cy="6.200" r="6" fill="url(#gnet)"/><path d="M7.500 3c2 1.500 3.500 0 5 1s2.500 3 4.500 2.500M8 9c2-1 3.500 1 5.500 0" stroke="#d4ecfb" fill="none" stroke-width="1.200" opacity=".85"/><rect x=".7" y="7.200" width="11" height="6.800" fill="#4aa8f0" stroke="#dfe8f0" stroke-width=".9"/><path d="M1.200 7.700h10v3l-10 2.500z" fill="#7fc6fa" opacity=".7"/><path d="M4 15.700h4.500M6.200 14v1.700" stroke="#93a3b3" stroke-width="1"/></svg>
<span class="t" style="top:385px;line-height:16px;font-size:11.52px;color:#000;letter-spacing:0.124px;left:45px;">Netzwerk</span>
<svg class="a" style="left:32px;top:409.5px;" width="16" height="16" viewBox="0 0 16 16"><rect x=".5" y="1" width="15" height="10" fill="url(#gpc)" stroke="#e4eaf0"/><rect x=".2" y=".7" width="15.600" height="10.600" fill="none" stroke="#9aa8b8" stroke-width=".4"/><path d="M6.500 11.500h3v1.800h-3z" fill="#c4ccd6"/><path d="M4.500 13.300h7" stroke="#c4ccd6" stroke-width=".8"/><path d="M.5 15h15" stroke="#b4c0ce" stroke-width="1.100"/></svg>
<span class="t" style="top:409px;line-height:16px;font-size:11.52px;color:#000;letter-spacing:-0.359px;left:53.5px;">192.168.178.1</span>
<svg class="a" style="left:32px;top:433.5px;" width="16" height="16" viewBox="0 0 16 16"><rect x=".5" y="1" width="15" height="10" fill="url(#gpc)" stroke="#e4eaf0"/><rect x=".2" y=".7" width="15.600" height="10.600" fill="none" stroke="#9aa8b8" stroke-width=".4"/><path d="M6.500 11.500h3v1.800h-3z" fill="#c4ccd6"/><path d="M4.500 13.300h7" stroke="#c4ccd6" stroke-width=".8"/><path d="M.5 15h15" stroke="#b4c0ce" stroke-width="1.100"/></svg>
<span class="t" style="top:433px;line-height:16px;font-size:11.52px;color:#000;letter-spacing:-0.594px;left:53.5px;">DESKTOP-IUPA6ST</span>
</div></div>
<div class="a" style="left:401px;top:181px;width:16px;height:283px;background:#f0f0f0;border-right:1px solid #f6f6f6;"></div>
<div class="a" style="left:401px;top:302px;width:15px;height:130px;background:#cdcdcd;"></div>
<svg class="a" style="left:404px;top:186px" width="9" height="8"><path d="M1 6l3.500-3.500 3.500 3.500" fill="none" stroke="#404040" stroke-width="1.600"/></svg>
<svg class="a" style="left:404px;top:451px" width="9" height="8"><path d="M1 2l3.500 3.500 3.500-3.500" fill="none" stroke="#404040" stroke-width="1.600"/></svg>
<div class="a" style="left:419px;top:181px;width:1px;height:283px;background:#f7f7f7;"></div>
<span class="t" style="top:186px;line-height:16px;font-size:11.52px;color:#4c607a;letter-spacing:0.068px;left:438.5px;">Name</span>
<span class="t" style="top:186px;line-height:16px;font-size:11.52px;color:#4c607a;letter-spacing:0.304px;left:699px;">Änderungsdatum</span>
<span class="t" style="top:186px;line-height:16px;font-size:11.52px;color:#4c607a;letter-spacing:-0.068px;left:843.5px;">Typ</span>
<span class="t" style="top:186px;line-height:16px;font-size:11.52px;color:#4c607a;letter-spacing:-0.130px;left:963.5px;">Größe</span>
<div class="a" style="left:692px;top:181px;width:1px;height:25px;background:#e5e5e5;"></div>
<div class="a" style="left:836px;top:181px;width:1px;height:25px;background:#e5e5e5;"></div>
<div class="a" style="left:956px;top:181px;width:1px;height:25px;background:#e5e5e5;"></div>
<div class="a" style="left:1036px;top:181px;width:1px;height:25px;background:#e5e5e5;"></div>
<svg class="a" style="left:557.5px;top:181px" width="10" height="6"><path d="M1 5l4-4 4 4" fill="none" stroke="#8a8a8a" stroke-width="1"/></svg>
<div class="a" style="left:441.5px;top:206px;width:12px;height:1.5px;background:#f5d67a;"></div>
<svg class="a" style="left:439px;top:213px;" width="16" height="16" viewBox="0 0 16 16"><path d="M2.500 .5h11v15h-11z" fill="url(#gfo)" stroke="#ebc84e"/><path d="M12.500 15.500v-5a1 1 0 0 1 2 0v5z" fill="#ffe694" stroke="#e9c444"/></svg>
<span class="t" style="top:214px;line-height:16px;font-size:11.52px;color:#000;letter-spacing:-0.452px;left:459px;">src</span>
<span class="t" style="top:214px;line-height:16px;font-size:11.52px;color:#6d6d6d;letter-spacing:-0.355px;left:699px;">28.10.2025 16:10</span>
<span class="t" style="top:214px;line-height:16px;font-size:11.52px;color:#6d6d6d;letter-spacing:0.164px;left:843.5px;">Dateiordner</span>
<svg class="a" style="left:439px;top:234px;" width="16" height="16" viewBox="0 0 16 16"><path d="M2.500 .5h11v15h-11z" fill="url(#gfo)" stroke="#ebc84e"/><path d="M12.500 15.500v-5a1 1 0 0 1 2 0v5z" fill="#ffe694" stroke="#e9c444"/></svg>
<span class="t" style="top:235px;line-height:16px;font-size:11.52px;color:#000;letter-spacing:0.108px;left:459px;">test</span>
<span class="t" style="top:235px;line-height:16px;font-size:11.52px;color:#6d6d6d;letter-spacing:-0.355px;left:699px;">28.10.2025 16:10</span>
<span class="t" style="top:235px;line-height:16px;font-size:11.52px;color:#6d6d6d;letter-spacing:0.164px;left:843.5px;">Dateiordner</span>
<svg class="a" style="left:439px;top:255px;" width="16" height="16" viewBox="0 0 16 16"><path d="M5.200 3.500h10.300l-.6 11.500h-10.500z" fill="#fdfdfd" stroke="#c9b78c" stroke-width=".8"/><path d="M3.600 2.600h11.300l-1.800 11.100h-12.200z" fill="#8ecbe2"/><path d="M3.600 2.600h11.300l-1.800 11.100h-12.200z" fill="none" stroke="#5fa9c8" stroke-width=".7"/><path d="M3.300 4.500h11.200M3 6.300h11.200M2.600 8.100h11.200M2.300 9.900h11.200M2 11.700h11.200" stroke="#c4e6f2" stroke-width=".7"/><path d="M4 1.700h10.600" stroke="#4a4a4a" stroke-width="1.700" stroke-dasharray=".9 .7"/></svg>
<span class="t" style="top:256px;line-height:16px;font-size:11.52px;color:#000;letter-spacing:0.361px;left:459px;">.gitignore</span>
<span class="t" style="top:256px;line-height:16px;font-size:11.52px;color:#6d6d6d;letter-spacing:-0.355px;left:699px;">28.10.2025 16:10</span>
<span class="t" style="top:256px;line-height:16px;font-size:11.52px;color:#6d6d6d;letter-spacing:-0.291px;left:843.5px;">GITIGNORE-Datei</span>
<span class="t" style="top:256px;line-height:16px;font-size:11.52px;color:#6d6d6d;letter-spacing:-0.494px;left:628.994px;width:400px;text-align:right;">1 KB</span>
<svg class="a" style="left:439px;top:276px;" width="16" height="16" viewBox="0 0 16 16"><path d="M2.500 .5h7.500l3.500 3.500v11.500h-11z" fill="#fcfcfc" stroke="#8c8c8c"/><path d="M10 .5v3.500h3.500" fill="none" stroke="#8c8c8c"/><path d="M4.500 4.500h4M4.500 6.500h7M4.500 8.500h7M4.500 10.500h7M4.500 12.500h7" stroke="#8f8f8f" stroke-width="1"/></svg>
<span class="t" style="top:277px;line-height:16px;font-size:11.52px;color:#000;letter-spacing:0.281px;left:459px;">.gitmodules</span>
<span class="t" style="top:277px;line-height:16px;font-size:11.52px;color:#6d6d6d;letter-spacing:-0.355px;left:699px;">28.10.2025 16:10</span>
<span class="t" style="top:277px;line-height:16px;font-size:11.52px;color:#6d6d6d;letter-spacing:0.250px;left:843.5px;">Textdokument</span>
<span class="t" style="top:277px;line-height:16px;font-size:11.52px;color:#6d6d6d;letter-spacing:-0.494px;left:628.994px;width:400px;text-align:right;">1 KB</span>
<svg class="a" style="left:439px;top:297px;" width="16" height="16" viewBox="0 0 16 16"><path d="M2.500 .5h7.500l3.500 3.500v11.500h-11z" fill="#fbfbfb" stroke="#8c8c8c"/><path d="M10 .5v3.500h3.500" fill="none" stroke="#8c8c8c"/></svg>
<span class="t" style="top:298px;line-height:16px;font-size:11.52px;color:#000;letter-spacing:0.222px;left:459px;">.gitpod.Dockerfile</span>
<span class="t" style="top:298px;line-height:16px;font-size:11.52px;color:#6d6d6d;letter-spacing:-0.355px;left:699px;">28.10.2025 16:10</span>
<span class="t" style="top:298px;line-height:16px;font-size:11.52px;color:#6d6d6d;letter-spacing:-0.459px;left:843.5px;">DOCKERFILE-Datei</span>
<span class="t" style="top:298px;line-height:16px;font-size:11.52px;color:#6d6d6d;letter-spacing:-0.494px;left:628.994px;width:400px;text-align:right;">1 KB</span>
<svg class="a" style="left:439px;top:318px;" width="16" height="16" viewBox="0 0 16 16"><path d="M2.500 .5h7.500l3.500 3.500v11.500h-11z" fill="#fbfbfb" stroke="#8c8c8c"/><path d="M10 .5v3.500h3.500" fill="none" stroke="#8c8c8c"/></svg>
<span class="t" style="top:319px;line-height:16px;font-size:11.52px;color:#000;letter-spacing:0.391px;left:459px;">.gitpod.yml</span>
<span class="t" style="top:319px;line-height:16px;font-size:11.52px;color:#6d6d6d;letter-spacing:-0.355px;left:699px;">28.10.2025 16:10</span>
<span class="t" style="top:319px;line-height:16px;font-size:11.52px;color:#6d6d6d;letter-spacing:0.176px;left:843.5px;">YML-Datei</span>
<span class="t" style="top:319px;line-height:16px;font-size:11.52px;color:#6d6d6d;letter-spacing:-0.494px;left:628.994px;width:400px;text-align:right;">1 KB</span>
<svg class="a" style="left:439px;top:339px;" width="16" height="16" viewBox="0 0 16 16"><path d="M2.500 .5h7.500l3.500 3.500v11.500h-11z" fill="#fbfbfb" stroke="#8c8c8c"/><path d="M10 .5v3.500h3.500" fill="none" stroke="#8c8c8c"/></svg>
<span class="t" style="top:340px;line-height:16px;font-size:11.52px;color:#000;letter-spacing:0.105px;left:459px;">.travis.yml</span>
<span class="t" style="top:340px;line-height:16px;font-size:11.52px;color:#6d6d6d;letter-spacing:-0.355px;left:699px;">28.10.2025 16:10</span>
<span class="t" style="top:340px;line-height:16px;font-size:11.52px;color:#6d6d6d;letter-spacing:0.176px;left:843.5px;">YML-Datei</span>
<span class="t" style="top:340px;line-height:16px;font-size:11.52px;color:#6d6d6d;letter-spacing:-0.494px;left:628.994px;width:400px;text-align:right;">1 KB</span>
<svg class="a" style="left:439px;top:360px;" width="16" height="16" viewBox="0 0 16 16"><path d="M2.500 .5h7.500l3.500 3.500v11.500h-11z" fill="#fbfbfb" stroke="#8c8c8c"/><path d="M10 .5v3.500h3.500" fill="none" stroke="#8c8c8c"/></svg>
<span class="t" style="top:361px;line-height:16px;font-size:11.52px;color:#000;letter-spacing:-0.900px;left:459px;">LICENSE</span>
<span class="t" style="top:361px;line-height:16px;font-size:11.52px;color:#6d6d6d;letter-spacing:-0.355px;left:699px;">28.10.2025 16:10</span>
<span class="t" style="top:361px;line-height:16px;font-size:11.52px;color:#6d6d6d;letter-spacing:-0.069px;left:843.5px;">Datei</span>
<span class="t" style="top:361px;line-height:16px;font-size:11.52px;color:#6d6d6d;letter-spacing:-0.476px;left:628.976px;width:400px;text-align:right;">35 KB</span>
<svg class="a" style="left:439px;top:381px;" width="16" height="16" viewBox="0 0 16 16"><path d="M2.500 .5h7.500l3.500 3.500v11.500h-11z" fill="#fbfbfb" stroke="#8c8c8c"/><path d="M10 .5v3.500h3.500" fill="none" stroke="#8c8c8c"/></svg>
<span class="t" style="top:382px;line-height:16px;font-size:11.52px;color:#000;letter-spacing:0.263px;left:459px;">Makefile</span>
<span class="t" style="top:382px;line-height:16px;font-size:11.52px;color:#6d6d6d;letter-spacing:-0.355px;left:699px;">28.10.2025 16:10</span>
<span class="t" style="top:382px;line-height:16px;font-size:11.52px;color:#6d6d6d;letter-spacing:-0.069px;left:843.5px;">Datei</span>
<span class="t" style="top:382px;line-height:16px;font-size:11.52px;color:#6d6d6d;letter-spacing:-0.494px;left:628.994px;width:400px;text-align:right;">6 KB</span>
<svg class="a" style="left:439px;top:402px;" width="16" height="16" viewBox="0 0 16 16"><path d="M5.200 3.500h10.300l-.6 11.500h-10.500z" fill="#fdfdfd" stroke="#c9b78c" stroke-width=".8"/><path d="M3.600 2.600h11.300l-1.800 11.100h-12.200z" fill="#8ecbe2"/><path d="M3.600 2.600h11.300l-1.800 11.100h-12.200z" fill="none" stroke="#5fa9c8" stroke-width=".7"/><path d="M3.300 4.500h11.200M3 6.300h11.200M2.600 8.100h11.200M2.300 9.900h11.200M2 11.700h11.200" stroke="#c4e6f2" stroke-width=".7"/><path d="M4 1.700h10.600" stroke="#4a4a4a" stroke-width="1.700" stroke-dasharray=".9 .7"/></svg>
<span class="t" style="top:403px;line-height:16px;font-size:11.52px;color:#000;letter-spacing:-0.277px;left:459px;">README.md</span>
<span class="t" style="top:403px;line-height:16px;font-size:11.52px;color:#6d6d6d;letter-spacing:-0.355px;left:699px;">28.10.2025 16:10</span>
<span class="t" style="top:403px;line-height:16px;font-size:11.52px;color:#6d6d6d;letter-spacing:0.294px;left:843.5px;">MD-Datei</span>
<span class="t" style="top:403px;line-height:16px;font-size:11.52px;color:#6d6d6d;letter-spacing:-0.494px;left:628.994px;width:400px;text-align:right;">3 KB</span>
<svg class="a" style="left:439px;top:423px;" width="16" height="16" viewBox="0 0 16 16"><path d="M5.200 3.500h10.300l-.6 11.500h-10.500z" fill="#fdfdfd" stroke="#c9b78c" stroke-width=".8"/><path d="M3.600 2.600h11.300l-1.800 11.100h-12.200z" fill="#8ecbe2"/><path d="M3.600 2.600h11.300l-1.800 11.100h-12.200z" fill="none" stroke="#5fa9c8" stroke-width=".7"/><path d="M3.300 4.500h11.200M3 6.300h11.200M2.600 8.100h11.200M2.300 9.900h11.200M2 11.700h11.200" stroke="#c4e6f2" stroke-width=".7"/><path d="M4 1.700h10.600" stroke="#4a4a4a" stroke-width="1.700" stroke-dasharray=".9 .7"/></svg>
<span class="t" style="top:424px;line-height:16px;font-size:11.52px;color:#000;letter-spacing:0.037px;left:459px;">sinus.cbp</span>
<span class="t" style="top:424px;line-height:16px;font-size:11.52px;color:#6d6d6d;letter-spacing:-0.355px;left:699px;">28.10.2025 16:10</span>
<span class="t" style="top:424px;line-height:16px;font-size:11.52px;color:#6d6d6d;letter-spacing:-0.157px;left:843.5px;">CBP-Datei</span>
<span class="t" style="top:424px;line-height:16px;font-size:11.52px;color:#6d6d6d;letter-spacing:-0.494px;left:628.994px;width:400px;text-align:right;">9 KB</span>
<div class="a" style="left:435px;top:442px;width:598px;height:21px;background:#d9d9d9;"></div>
<svg class="a" style="left:439px;top:444px;" width="16" height="16" viewBox="0 0 16 16"><path d="M5.200 3.500h10.300l-.6 11.500h-10.500z" fill="#fdfdfd" stroke="#c9b78c" stroke-width=".8"/><path d="M3.600 2.600h11.300l-1.800 11.100h-12.200z" fill="#8ecbe2"/><path d="M3.600 2.600h11.300l-1.800 11.100h-12.200z" fill="none" stroke="#5fa9c8" stroke-width=".7"/><path d="M3.300 4.500h11.200M3 6.300h11.200M2.600 8.100h11.200M2.300 9.900h11.200M2 11.700h11.200" stroke="#c4e6f2" stroke-width=".7"/><path d="M4 1.700h10.600" stroke="#4a4a4a" stroke-width="1.700" stroke-dasharray=".9 .7"/></svg>
<span class="t" style="top:445px;line-height:16px;font-size:11.52px;color:#000;letter-spacing:-0.083px;left:459px;">stm32_sine.ld</span>
<span class="t" style="top:445px;line-height:16px;font-size:11.52px;color:#6d6d6d;letter-spacing:-0.355px;left:699px;">28.10.2025 16:10</span>
<span class="t" style="top:445px;line-height:16px;font-size:11.52px;color:#6d6d6d;letter-spacing:0.068px;left:843.5px;">LD-Datei</span>
<span class="t" style="top:445px;line-height:16px;font-size:11.52px;color:#6d6d6d;letter-spacing:-0.494px;left:628.994px;width:400px;text-align:right;">2 KB</span>
<div class="a" style="left:1093px;top:181px;width:16px;height:283px;background:#f0f0f0;border-right:1px solid #f6f6f6;"></div>
<div class="a" style="left:1093px;top:267px;width:15px;height:180px;background:#cdcdcd;"></div>
<svg class="a" style="left:1096px;top:186px" width="9" height="8"><path d="M1 6l3.500-3.500 3.500 3.500" fill="none" stroke="#404040" stroke-width="1.600"/></svg>
<svg class="a" style="left:1096px;top:451px" width="9" height="8"><path d="M1 2l3.500 3.500 3.500-3.500" fill="none" stroke="#404040" stroke-width="1.600"/></svg>
<div class="a" style="left:1110px;top:181px;width:1px;height:283px;background:#f0f0f0;"></div>
<span class="t" style="top:315px;line-height:16px;font-size:11.52px;color:#6d6d6d;letter-spacing:-0.026px;left:1048.51px;width:400px;text-align:center;">Es ist keine Vorschau verfügbar.</span>
<span class="t" style="top:467px;line-height:16px;font-size:11.52px;color:#1e395b;letter-spacing:-0.153px;left:15px;">18 Elemente</span>
<div class="a" style="left:88px;top:469px;width:1px;height:15px;background:#ececec;"></div>
<span class="t" style="top:467px;line-height:16px;font-size:11.52px;color:#1e395b;letter-spacing:-0.074px;left:100px;">1 Element ausgewählt (1,04 KB)</span>
<div class="a" style="left:272px;top:469px;width:1px;height:15px;background:#ececec;"></div>
<div class="a" style="left:1338px;top:464px;width:22px;height:23px;background:#cfe6f5;border:1px solid #2a98d8;"></div>
<svg class="a" style="left:1341px;top:468px" width="18" height="15"><g fill="#fff" stroke="#8a8a8a" stroke-width="1"><rect x="1.500" y="1.500" width="4" height="12"/></g><path d="M1.500 5.500h4M1.500 9.500h4" stroke="#8a8a8a"/><rect x="3" y="3" width="1" height="1" fill="#2a7a4a"/><rect x="3" y="7" width="1" height="1" fill="#3a6ae0"/><rect x="3" y="11" width="1" height="1" fill="#e02a2a"/><path d="M7 3.500h4M13 3.500h4M7 7.500h4M13 7.500h4M7 11.500h4M13 11.500h4" stroke="#6a6a6a"/></svg>
<svg class="a" style="left:1364px;top:469px" width="14" height="11"><rect x=".5" y=".5" width="13" height="10" fill="#fff" stroke="#9a9a9a"/><rect x="2" y="2" width="10" height="7" fill="#4a8ae0"/><path d="M2 9v-2.500c3-3 5 0 10-2v4.500z" fill="#4a7a6a"/><path d="M5 2h7v3c-3 1-5-1-7-3z" fill="#bfe0f8" opacity=".8"/></svg></div>
<div class="win" id="w2" style="left:96px;top:477px;border-color:#fdfdfd;box-shadow:0 0 0 1px rgba(0,0,0,.10),0 5px 20px 1px rgba(0,0,0,.42)"><svg class="a" style="left:8px;top:6px;" width="16" height="16" viewBox="0 0 16 16"><path d="M2.500 .5h11v15h-11z" fill="url(#gfo)" stroke="#ebc84e"/><path d="M12.500 15.500v-5a1 1 0 0 1 2 0v5z" fill="#ffe694" stroke="#e9c444"/></svg>
<div class="a" style="left:31px;top:8.5px;width:1px;height:12px;background:#8e8e8e;"></div>
<svg class="a" style="left:41px;top:7px;" width="16" height="16" viewBox="0 0 16 16"><path d="M2.500 .5h11v15h-11z" fill="url(#gfo)" stroke="#ebc84e"/><path d="M12.500 15.500v-5a1 1 0 0 1 2 0v5z" fill="#ffe694" stroke="#e9c444"/></svg>
<svg class="a" style="left:63px;top:7px;" width="16" height="16" viewBox="0 0 16 16"><path d="M2.5 .5h7.500l3.500 3.500v11.500h-11z" fill="#fff" stroke="#8a8a8a"/><path d="M10 .5v3.500h3.500" fill="none" stroke="#8a8a8a"/><path d="M4.800 9l2.200 3 4.300-6" fill="none" stroke="#f26522" stroke-width="1.700"/></svg>
<svg class="a" style="left:84px;top:12px" width="10" height="9"><path d="M1 1.500h8" stroke="#222" stroke-width="1"/><path d="M1.500 4h7l-3.500 3.500z" fill="#222"/></svg>
<div class="a" style="left:101px;top:8.5px;width:1px;height:12px;background:#8e8e8e;"></div>
<span class="t" style="top:7px;line-height:16px;font-size:11.52px;color:#000;letter-spacing:0.448px;left:109px;">C:\c-test\git-clone\stm32-sine</span>
<svg class="a" style="left:1262px;top:4px" width="112" height="20" fill="none" stroke="#000" stroke-width="1"><path d="M5 10.500h10"/><rect x="50.500" y="5.500" width="9" height="9"/><path d="M96 5l10 10M106 5l-10 10"/></svg>
<div class="a" style="left:0px;top:30px;width:56px;height:23px;background:#c1000f;"></div>
<span class="t" style="top:34px;line-height:16px;font-size:11.52px;color:#fff;letter-spacing:-0.069px;left:-171.966px;width:400px;text-align:center;">Datei</span>
<div class="a" style="left:56px;top:53px;width:1330px;height:1px;background:#dadbdc;"></div>
<div class="a" style="left:56px;top:30px;width:52px;height:24px;background:#f5f6f7;border:1px solid #dadbdc;border-bottom:none;"></div>
<span class="t" style="top:34px;line-height:16px;font-size:11.52px;color:#000;letter-spacing:-0.056px;left:-117.972px;width:400px;text-align:center;">Start</span>
<span class="t" style="top:34px;line-height:16px;font-size:11.52px;color:#000;letter-spacing:0.047px;left:-51.0237px;width:400px;text-align:center;">Freigeben</span>
<span class="t" style="top:34px;line-height:16px;font-size:11.52px;color:#000;letter-spacing:0.075px;left:22.9627px;width:400px;text-align:center;">Ansicht</span>
<svg class="a" style="left:1348px;top:37px" width="11" height="8"><path d="M1 6.500l4.500-4.500 4.500 4.500" fill="none" stroke="#a2a2a2" stroke-width="1.300"/></svg>
<svg class="a" style="left:1366.5px;top:33px;" width="16" height="16" viewBox="0 0 18 18"><circle cx="9" cy="9" r="8.300" fill="#1261c4" stroke="#0b4a9c"/></svg>
<span class="t" style="top:33px;line-height:16px;font-size:12px;color:#fff;letter-spacing:-0.674px;font-weight:700;left:1174.84px;width:400px;text-align:center;">?</span>
<div class="a" style="left:0px;top:54px;width:1386px;height:91px;background:#f5f6f7;"></div>
<div class="a" style="left:0px;top:145px;width:1386px;height:1px;background:#dadbdc;"></div>
<svg class="a" style="left:36px;top:61px;" width="32" height="32" viewBox="0 0 32 32"><g fill="#a9b9d6" transform="translate(16 16) scale(.84) translate(-16 -16)"><path d="M19 4l9 9-2 2-2-.5-5 5 .5 4-2 2-10-10 2-2 4 .5 5-5-.5-2z"/><path d="M11.500 19l1.800 1.800-8 7.500-1.300-1.300z"/></g></svg>
<span class="t" style="top:95px;line-height:16px;font-size:11.52px;color:#8d8d8d;letter-spacing:0.109px;left:-148.055px;width:400px;text-align:center;">An Schnellzugriff</span>
<span class="t" style="top:108px;line-height:16px;font-size:11.52px;color:#8d8d8d;letter-spacing:0.307px;left:-148.154px;width:400px;text-align:center;">anheften</span>
<svg class="a" style="left:108px;top:61px;" width="32" height="32" viewBox="0 0 32 32"><path d="M4.500 2.500h11l4.500 4.500v14.500h-15.500z" fill="#fff" stroke="#9a9a9a"/><path d="M15.500 2.500v4.500h4.500" fill="none" stroke="#9a9a9a"/><path d="M7 7.500h7M7 9.500h10M7 11.500h5M7 13.500h5M7 15.500h5" stroke="#8ab4ee" stroke-width="1"/><path d="M12.500 10.500h11l4.500 4.500v14.500h-15.500z" fill="#fff" stroke="#8c8c8c"/><path d="M23.500 10.500v4.500h4.500" fill="none" stroke="#8c8c8c"/><path d="M15 15.500h7M15 17.500h10.500M15 19.500h10.500M15 21.500h10.500M15 23.500h10.500M15 25.500h10.500M15 27.500h10.500" stroke="#4a8fe8" stroke-width="1"/></svg>
<span class="t" style="top:95px;line-height:16px;font-size:11.52px;color:#000;letter-spacing:0.023px;left:-76.0116px;width:400px;text-align:center;">Kopieren</span>
<svg class="a" style="left:160px;top:61px;" width="32" height="32" viewBox="0 0 32 32"><rect x="6.500" y="4.500" width="19" height="25" rx="1.500" fill="#95a0c0" stroke="#7f8bb0"/><rect x="9" y="7.500" width="14" height="19.500" fill="#e8eefc"/><path d="M9 10.500h14M9 12.500h14M9 14.500h14M9 16.500h14M9 18.500h14M9 20.500h14M9 22.500h14M9 24.500h14" stroke="#c6d2ee" stroke-width=".8"/><path d="M11.500 7.500v-3h3a1.500 1.500 0 0 1 3 0h3v3z" fill="#cfd6e8" stroke="#8893b4" stroke-width=".8"/></svg>
<span class="t" style="top:95px;line-height:16px;font-size:11.52px;color:#8d8d8d;letter-spacing:0.165px;left:-24.0826px;width:400px;text-align:center;">Einfügen</span>
<svg class="a" style="left:205px;top:61px;" width="16" height="16" viewBox="0 0 16 16"><path d="M4.500 1l4.500 9M11.500 1l-4.500 9" stroke="#7a7a7a" stroke-width="1.100" fill="none"/><circle cx="5" cy="12.500" r="2.200" fill="none" stroke="#1b78c8" stroke-width="1.400"/><circle cx="11" cy="12.500" r="2.200" fill="none" stroke="#1b78c8" stroke-width="1.400"/></svg>
<span class="t" style="top:61px;line-height:16px;font-size:11.52px;color:#000;letter-spacing:-0.068px;left:224px;">Ausschneiden</span>
<svg class="a" style="left:205px;top:83px;" width="16" height="16" viewBox="0 0 16 16"><rect x=".5" y="4.500" width="15" height="8" fill="#cfe6fa" stroke="#7ab8e8"/><path d="M2.500 6.500l1.500 4M4.500 6.500l1.500 4M7 6.500l1.500 4" stroke="#1a1a1a" stroke-width="1"/><path d="M10 10h1M12 10h1M14 10h.8" stroke="#1a1a1a" stroke-width="1.200"/></svg>
<span class="t" style="top:83px;line-height:16px;font-size:11.52px;color:#000;letter-spacing:0.035px;left:224px;">Pfad kopieren</span>
<svg class="a" style="left:205px;top:105px;" width="16" height="16" viewBox="0 0 16 16"><rect x="2.500" y="2.500" width="11" height="12.500" rx="1" fill="#c5cde0" stroke="#8d97b5"/><rect x="5.500" y="1" width="5" height="2.500" fill="#dfe4f0" stroke="#8d97b5" stroke-width=".7"/><rect x="4.500" y="6" width="7" height="7" fill="#fff" stroke="#8d97b5" stroke-width=".7"/><path d="M6 11.500c0-2.500 1.500-3.500 3-3.500v-1.200l2 2-2 2v-1.200c-1 0-2 .3-3 1.900z" fill="#6a7cb0"/></svg>
<span class="t" style="top:105px;line-height:16px;font-size:11.52px;color:#8d8d8d;letter-spacing:0.253px;left:224px;">Verknüpfung einfügen</span>
<span class="t" style="top:128px;line-height:16px;font-size:11.52px;color:#4a4a4a;letter-spacing:-0.032px;left:-24.4839px;width:400px;text-align:center;">Zwischenablage</span>
<div class="a" style="left:352px;top:56px;width:1px;height:86px;background:#e2e3e4;"></div>
<svg class="a" style="left:375.5px;top:61px;" width="32" height="32" viewBox="0 0 32 32"><path d="M3.500 2.500h20v19h1.500v8h-21.500z" fill="url(#gfo)" stroke="#f0cb5e"/><path d="M23.500 21.500v8" stroke="#f0c95a"/><path d="M13.200 23l8.800-8.200v4.700h8v7h-8v4.700z" fill="#2b8be0"/></svg>
<span class="t" style="top:95px;line-height:16px;font-size:11.52px;color:#000;letter-spacing:-0.226px;left:190.113px;width:400px;text-align:center;">Verschieben</span>
<span class="t" style="top:108px;line-height:16px;font-size:11.52px;color:#000;letter-spacing:-0.045px;left:373.5px;">nach</span>
<svg class="a" style="left:400px;top:114.5px" width="7" height="4"><path d="M.5 .3h6l-3 3.200z" fill="#222"/></svg>
<svg class="a" style="left:434px;top:61px;" width="32" height="32" viewBox="0 0 32 32"><path d="M4.500 6.500h21v15h1v8.500h-22z" fill="url(#gfo)" stroke="#f0cb5e"/><path d="M16.500 6.500v23.500M24.500 21.500v8.500" stroke="#f0cb5e" opacity=".8"/><path d="M13.500 .5h8l3 3v7h-11z" fill="#fff" stroke="#a2a2a2"/><path d="M15.500 3.500h4" stroke="#8ab4ee"/><path d="M17.500 2.500h9l4 4v12h-13z" fill="#fff" stroke="#8c8c8c"/><path d="M26.500 2.500v4h4" fill="none" stroke="#8c8c8c"/><path d="M19.500 7.500h6M19.500 9.500h9M19.500 11.500h9M19.500 13.500h9M19.500 15.500h9" stroke="#4a8fe8" stroke-width="1"/></svg>
<span class="t" style="top:95px;line-height:16px;font-size:11.52px;color:#000;letter-spacing:0.023px;left:249.988px;width:400px;text-align:center;">Kopieren</span>
<span class="t" style="top:108px;line-height:16px;font-size:11.52px;color:#000;letter-spacing:-0.045px;left:432.5px;">nach</span>
<svg class="a" style="left:459px;top:114.5px" width="7" height="4"><path d="M.5 .3h6l-3 3.200z" fill="#222"/></svg>
<div class="a" style="left:479px;top:63px;width:1px;height:54px;background:#e2e3e4;"></div>
<svg class="a" style="left:490px;top:61px;" width="32" height="32" viewBox="0 0 32 32"><path d="M5.500 5.200l21 21M26.500 5.200l-21 21" stroke="#dc0814" stroke-width="5" fill="none"/></svg>
<span class="t" style="top:95px;line-height:16px;font-size:11.52px;color:#000;letter-spacing:-0.215px;left:306.107px;width:400px;text-align:center;">Löschen</span>
<svg class="a" style="left:502px;top:114px" width="7" height="4"><path d="M.5 .3h6l-3 3.200z" fill="#222"/></svg>
<svg class="a" style="left:551px;top:61px;" width="32" height="32" viewBox="0 0 32 32"><rect x="2.500" y="10.500" width="26" height="11" fill="#fff" stroke="#9a9a9a"/><rect x="5" y="13" width="12" height="6" fill="#2b8be0"/><path d="M19 3.500c3 0 4 1 4 3v19c0 2-1 3-4 3M27 3.500c-3 0-4 1-4 3v19c0 2 1 3 4 3M21 16h4" stroke="#555" stroke-width="1.600" fill="none"/></svg>
<span class="t" style="top:95px;line-height:16px;font-size:11.52px;color:#000;letter-spacing:0.038px;left:366.981px;width:400px;text-align:center;">Umbenennen</span>
<span class="t" style="top:128px;line-height:16px;font-size:11.52px;color:#4a4a4a;letter-spacing:0.087px;left:280.456px;width:400px;text-align:center;">Organisieren</span>
<div class="a" style="left:611px;top:56px;width:1px;height:86px;background:#e2e3e4;"></div>
<svg class="a" style="left:620px;top:61px;" width="32" height="32" viewBox="0 0 32 32"><path d="M6.500 4.500l3-1.500h13.500v15l3 1v6.500l-12.500 4.500-7-2.500z" fill="url(#gnf)"/><path d="M6.500 4.500l6.500 2v23.500l-6.500-2.500z" fill="#f4cf62"/><path d="M13 6.500l10-3.500" stroke="#ffe9a6" fill="none"/></svg>
<span class="t" style="top:95px;line-height:16px;font-size:11.52px;color:#000;letter-spacing:0.125px;left:435.938px;width:400px;text-align:center;">Neuer</span>
<span class="t" style="top:108px;line-height:16px;font-size:11.52px;color:#000;letter-spacing:0.191px;left:435.904px;width:400px;text-align:center;">Ordner</span>
<svg class="a" style="left:661px;top:61px;" width="16" height="16" viewBox="0 0 16 16"><rect x=".5" y=".5" width="8" height="7" fill="#dce9f7" stroke="#6d8fb8"/><rect x="2" y="2" width="3" height="2.500" fill="#4a7cc4"/><path d="M4.500 5.500h6l2 0v8h-8z" fill="#fff" stroke="#8c8c8c"/><path d="M8.500 8.500h6.500v7h-6.500z" fill="#fff" stroke="#8c8c8c"/><path d="M10 10.500h3.500M10 12.500h3.500M10 14h3.500" stroke="#d05050" stroke-width=".8"/></svg>
<span class="t" style="top:61px;line-height:16px;font-size:11.52px;color:#000;letter-spacing:-0.251px;left:680.5px;">Neues Element</span>
<svg class="a" style="left:759px;top:67.5px" width="7" height="4"><path d="M.5 .3h6l-3 3.200z" fill="#222"/></svg>
<svg class="a" style="left:661px;top:83px;" width="16" height="16" viewBox="0 0 16 16"><path d="M5.500 2.500h6l3 3v10h-9z" fill="#fff" stroke="#8c8c8c"/><path d="M11.500 2.500v3h3" fill="none" stroke="#8c8c8c"/><path d="M1 5.500h6M2 7.500h4M3 3.500h4M1.500 9.500h3" stroke="#1b5fb0" stroke-width="1"/></svg>
<span class="t" style="top:83px;line-height:16px;font-size:11.52px;color:#000;letter-spacing:0.064px;left:680.5px;">Einfacher Zugriff</span>
<svg class="a" style="left:768.5px;top:89.5px" width="7" height="4"><path d="M.5 .3h6l-3 3.200z" fill="#222"/></svg>
<span class="t" style="top:128px;line-height:16px;font-size:11.52px;color:#4a4a4a;letter-spacing:0.289px;left:497.356px;width:400px;text-align:center;">Neu</span>
<div class="a" style="left:785px;top:56px;width:1px;height:86px;background:#e2e3e4;"></div>
<svg class="a" style="left:811.5px;top:61px;" width="32" height="32" viewBox="0 0 32 32"><path d="M6.500 2.500h14l6 6v21h-20z" fill="#fff" stroke="#8c8c8c"/><path d="M20.500 2.500v6h6" fill="none" stroke="#8c8c8c"/><path d="M10.500 17l4.500 5.500 8-10" fill="none" stroke="#f26522" stroke-width="2.600"/></svg>
<span class="t" style="top:95px;line-height:16px;font-size:11.52px;color:#000;letter-spacing:-0.016px;left:628.508px;width:400px;text-align:center;">Eigenschaften</span>
<svg class="a" style="left:825px;top:114px" width="7" height="4"><path d="M.5 .3h6l-3 3.200z" fill="#222"/></svg>
<svg class="a" style="left:871.5px;top:61px;" width="16" height="16" viewBox="0 0 16 16"><path d="M5.200 3.500h10.300l-.6 11.500h-10.500z" fill="#fdfdfd" stroke="#c9b78c" stroke-width=".8"/><path d="M3.600 2.600h11.300l-1.800 11.100h-12.200z" fill="#8ecbe2"/><path d="M3.600 2.600h11.300l-1.800 11.100h-12.200z" fill="none" stroke="#5fa9c8" stroke-width=".7"/><path d="M3.300 4.500h11.200M3 6.300h11.200M2.600 8.100h11.200M2.300 9.900h11.200M2 11.700h11.200" stroke="#c4e6f2" stroke-width=".7"/><path d="M4 1.700h10.600" stroke="#4a4a4a" stroke-width="1.700" stroke-dasharray=".9 .7"/></svg>
<span class="t" style="top:61px;line-height:16px;font-size:11.52px;color:#000;letter-spacing:0.386px;left:890.5px;">Öffnen</span>
<svg class="a" style="left:931px;top:67px" width="7" height="4"><path d="M.5 .3h6l-3 3.200z" fill="#222"/></svg>
<svg class="a" style="left:872px;top:83px;" width="16" height="16" viewBox="0 0 16 16"><path d="M2.500 1.500h7l3 3v10h-10z" fill="#fff" stroke="#8c8c8c"/><path d="M9.500 1.500v3h3" fill="none" stroke="#8c8c8c"/><path d="M5 13l1-3 7-7.500 2 2-7 7.500z" fill="#f8c030" stroke="#c89018" stroke-width=".6"/><path d="M13 2.500l2 2" stroke="#e05050" stroke-width="1.500"/></svg>
<span class="t" style="top:83px;line-height:16px;font-size:11.52px;color:#000;letter-spacing:-0.072px;left:890.5px;">Bearbeiten</span>
<svg class="a" style="left:872px;top:105px;" width="16" height="16" viewBox="0 0 16 16"><path d="M1.500 1.500h8v9h1v4h-9z" fill="#ffe48a" stroke="#eec04a"/><circle cx="11" cy="11" r="4.300" fill="#f4f4f4" stroke="#7a7a7a"/><path d="M11 8.500v2.700l1.800-1.200" stroke="#555" fill="none" stroke-width=".9"/><path d="M3 10.500l3.500-2.500v1.800c2 0 3 .8 3.500 2.500-1-.8-2-1-3.500-1v1.700z" fill="#28a745"/></svg>
<span class="t" style="top:105px;line-height:16px;font-size:11.52px;color:#000;letter-spacing:-0.143px;left:890.5px;">Verlauf</span>
<span class="t" style="top:128px;line-height:16px;font-size:11.52px;color:#4a4a4a;letter-spacing:0.386px;left:669.557px;width:400px;text-align:center;">Öffnen</span>
<div class="a" style="left:955px;top:56px;width:1px;height:86px;background:#e2e3e4;"></div>
<svg class="a" style="left:963px;top:61px;" width="16" height="16" viewBox="0 0 16 16"><g fill="#b3dbfa" stroke="#2d98ef"><rect x=".5" y=".5" width="7" height="7"/><rect x="8.500" y=".5" width="7" height="7"/><rect x=".5" y="8.500" width="7" height="7"/><rect x="8.500" y="8.500" width="7" height="7"/></g><path d="M8 0v16M0 8h16" stroke="#e8f4fe" stroke-width=".6"/></svg>
<span class="t" style="top:61px;line-height:16px;font-size:11.52px;color:#000;letter-spacing:-0.013px;left:982px;">Alles auswählen</span>
<svg class="a" style="left:963px;top:83px;" width="16" height="16" viewBox="0 0 16 16"><g fill="#fff" stroke="#9a9a9a"><rect x="1.500" y="1.500" width="5" height="5"/><rect x="9.500" y="1.500" width="5" height="5"/><rect x="1.500" y="9.500" width="5" height="5"/><rect x="9.500" y="9.500" width="5" height="5"/></g></svg>
<span class="t" style="top:83px;line-height:16px;font-size:11.52px;color:#000;letter-spacing:0.016px;left:982px;">Nichts auswählen</span>
<svg class="a" style="left:963px;top:105px;" width="16" height="16" viewBox="0 0 16 16"><g stroke="#9a9a9a" fill="#fff"><rect x="1.500" y="1.500" width="5" height="5"/><rect x="9.500" y="9.500" width="5" height="5"/></g><g fill="#9fd0f5" stroke="#2b8be0"><rect x="8.500" y=".5" width="7" height="7"/><rect x=".5" y="8.500" width="7" height="7"/></g></svg>
<span class="t" style="top:105px;line-height:16px;font-size:11.52px;color:#000;letter-spacing:0.036px;left:982px;">Auswahl umkehren</span>
<span class="t" style="top:128px;line-height:16px;font-size:11.52px;color:#4a4a4a;letter-spacing:0.021px;left:821.989px;width:400px;text-align:center;">Auswählen</span>
<div class="a" style="left:1091px;top:56px;width:1px;height:86px;background:#e2e3e4;"></div>
<svg class="a" style="left:12px;top:156px" width="90" height="14" fill="none" stroke-width="1.300"><path d="M1.500 7h12M7 1.500l-5.500 5.500 5.500 5.500" stroke="#5a5a5a"/><path d="M30.500 7h12M37 1.500l5.500 5.500-5.500 5.500" stroke="#c4c4c4"/><path d="M58.500 5.500l2.700 2.700 2.700-2.700" stroke="#6a6a6a"/><path d="M81.500 13v-11.500M76 7l5.500-5.500 5.500 5.500" stroke="#5a5a5a"/></svg>
<div class="a" style="left:106px;top:152px;width:1037px;height:22px;background:#fff;border:1px solid #d9d9d9;"></div>
<div class="a" style="left:1142px;top:152px;width:18px;height:22px;background:#fff;border:1px solid #d9d9d9;"></div>
<svg class="a" style="left:109.5px;top:154.5px;" width="16" height="16" viewBox="0 0 16 16"><path d="M2.500 .5h11v15h-11z" fill="url(#gfo)" stroke="#ebc84e"/><path d="M12.500 15.500v-5a1 1 0 0 1 2 0v5z" fill="#ffe694" stroke="#e9c444"/></svg>
<svg class="a" style="left:131.5px;top:159.5px" width="6" height="8"><path d="M1 1l3 3-3 3" fill="none" stroke="#6a6a6a" stroke-width="1.200"/></svg>
<span class="t" style="top:155px;line-height:16px;font-size:11.52px;color:#000;letter-spacing:-0.388px;left:146px;">Dieser PC</span>
<svg class="a" style="left:204.5px;top:159.5px" width="6" height="8"><path d="M1 1l3 3-3 3" fill="none" stroke="#6a6a6a" stroke-width="1.200"/></svg>
<span class="t" style="top:155px;line-height:16px;font-size:11.52px;color:#000;letter-spacing:-0.009px;left:219px;">Lokaler Datenträger (C:)</span>
<svg class="a" style="left:352.5px;top:159.5px" width="6" height="8"><path d="M1 1l3 3-3 3" fill="none" stroke="#6a6a6a" stroke-width="1.200"/></svg>
<span class="t" style="top:155px;line-height:16px;font-size:11.52px;color:#000;letter-spacing:0.139px;left:367px;">c-test</span>
<svg class="a" style="left:405.5px;top:159.5px" width="6" height="8"><path d="M1 1l3 3-3 3" fill="none" stroke="#6a6a6a" stroke-width="1.200"/></svg>
<span class="t" style="top:155px;line-height:16px;font-size:11.52px;color:#000;letter-spacing:0.384px;left:420px;">git-clone</span>
<svg class="a" style="left:476.5px;top:159.5px" width="6" height="8"><path d="M1 1l3 3-3 3" fill="none" stroke="#6a6a6a" stroke-width="1.200"/></svg>
<span class="t" style="top:155px;line-height:16px;font-size:11.52px;color:#000;letter-spacing:0.066px;left:491px;">stm32-sine</span>
<svg class="a" style="left:1129px;top:159px" width="12" height="9"><path d="M1.500 2.500l4.500 4.500 4.500-4.500" fill="none" stroke="#6e6e6e" stroke-width="1.700"/></svg>
<svg class="a" style="left:1144px;top:156px" width="16" height="16" fill="none" stroke="#6e6e6e" stroke-width="1.400"><path d="M11.800 5.700A4.600 4.600 0 1 1 7.200 3.800"/><path d="M4.300 2.600h4.200v4.100"/></svg>
<div class="a" style="left:1172px;top:152px;width:202px;height:22px;background:#fff;border:1px solid #d9d9d9;"></div>
<span class="t" style="top:155px;line-height:16px;font-size:11.52px;color:#6d6d6d;letter-spacing:0.068px;left:1178.5px;">stm32-sine durchsuchen</span>
<svg class="a" style="left:1352px;top:156px" width="14" height="14" fill="none" stroke="#5a5a5a" stroke-width="1.500"><circle cx="8.500" cy="5.500" r="3.500"/><path d="M6 8l-4.500 4.500"/></svg>
<div class="a" style="left:0;top:181px;width:401px;height:283px;overflow:hidden"><div class="a" style="left:0;top:-181px">
<svg class="a" style="left:32px;top:185.5px;" width="16" height="16" viewBox="0 0 16 16"><path d="M4 .5h8v7h3.800l-7.800 8.300-7.800-8.300h3.800z" fill="#2e8fe4"/></svg>
<span class="t" style="top:185px;line-height:16px;font-size:11.52px;color:#000;letter-spacing:0.223px;left:53.5px;">Downloads</span>
<svg class="a" style="left:32px;top:209.5px;" width="16" height="16" viewBox="0 0 16 16"><path d="M8.200 .8c.5 3 5.500 3.800 4.800 8.600-.3 1.400-1 2.200-1.700 2.700 1-2.900-.6-4.800-2.800-5.300v6.500a3.600 2.900 -15 1 1-1.600-2.300v-10.200z" fill="#1e93ec"/></svg>
<span class="t" style="top:209px;line-height:16px;font-size:11.52px;color:#000;letter-spacing:0.384px;left:53.5px;">Musik</span>
<svg class="a" style="left:32px;top:233.5px;" width="16" height="16" viewBox="0 0 16 16"><rect x="1.5" y="1" width="13" height="14" fill="#3a3a3a"/><rect x="4" y="1.500" width="8" height="6" fill="#5b8fd6"/><rect x="4" y="8.500" width="8" height="6" fill="#4a7cc4"/><path d="M5 6l2-3 2 2 2-1.500v3z" fill="#f0c040"/><path d="M5 13.500l2-3 2 2 2-1.500v3z" fill="#e06030"/><path d="M2.200 2.500h1M2.200 5h1M2.200 7.500h1M2.200 10h1M2.200 12.500h1M12.800 2.500h1M12.800 5h1M12.800 7.500h1M12.800 10h1M12.800 12.500h1" stroke="#fff" stroke-width="1.200"/></svg>
<span class="t" style="top:233px;line-height:16px;font-size:11.52px;color:#000;letter-spacing:-0.037px;left:53.5px;">Videos</span>
<div class="a" style="left:0px;top:253px;width:400px;height:24px;background:#d9d9d9;"></div>
<svg class="a" style="left:32px;top:257.5px;" width="16" height="16" viewBox="0 0 16 16"><path d="M2.500 9.500l1-1.500h9l1 1.500z" fill="#d5d5d5"/><rect x="1.800" y="9.500" width="12.700" height="2" fill="#bdbdbd"/><rect x="1.800" y="11" width="12.700" height="3.800" rx=".6" fill="#2e2e2e"/><rect x="11" y="12.300" width="2" height="1.200" fill="#3fdc3f"/><path d="M0 1.500h2.600v2.600h-2.600zM3.400 1.500h2.600v2.600h-2.600zM0 4.900h2.600v2.600h-2.600zM3.400 4.900h2.600v2.600h-2.600z" fill="#20aef2"/></svg>
<span class="t" style="top:257px;line-height:16px;font-size:11.52px;color:#000;letter-spacing:-0.009px;left:53.5px;">Lokaler Datenträger (C:)</span>
<svg class="a" style="left:32px;top:281.5px;" width="16" height="16" viewBox="0 0 16 16"><path d="M2.500 4l1.200-2.500h8.600l1.200 2.500z" fill="#dcdcdc"/><rect x="1.800" y="3.800" width="12.400" height="1.800" fill="#c2c2c2"/><rect x="1.800" y="5.200" width="12.400" height="4" rx=".6" fill="#2e2e2e"/><rect x="10.800" y="6.600" width="2" height="1.200" fill="#3fdc3f"/><path d="M6.700 9.200h2.600v3h-2.600z" fill="#35b558"/><path d="M1.800 13h12.400v2.200h-12.400z" fill="#3cc463"/><path d="M5.500 12h5v3.200h-5z" fill="#2fa850"/></svg>
<span class="t" style="top:281px;line-height:16px;font-size:11.52px;color:#000;letter-spacing:0.196px;left:53.5px;">EM-Daten (\\diskstation) (E:)</span>
<svg class="a" style="left:32px;top:305.5px;" width="16" height="16" viewBox="0 0 16 16"><path d="M2.500 4l1.200-2.500h8.600l1.200 2.500z" fill="#dcdcdc"/><rect x="1.800" y="3.800" width="12.400" height="1.800" fill="#c2c2c2"/><rect x="1.800" y="5.200" width="12.400" height="4" rx=".6" fill="#2e2e2e"/><rect x="10.800" y="6.600" width="2" height="1.200" fill="#3fdc3f"/><path d="M6.700 9.200h2.600v3h-2.600z" fill="#35b558"/><path d="M1.800 13h12.400v2.200h-12.400z" fill="#3cc463"/><path d="M5.500 12h5v3.200h-5z" fill="#2fa850"/></svg>
<span class="t" style="top:305px;line-height:16px;font-size:11.52px;color:#000;letter-spacing:0.241px;left:53.5px;">FM-Daten (\\diskstation) (F:)</span>
<svg class="a" style="left:32px;top:329.5px;" width="16" height="16" viewBox="0 0 16 16"><path d="M2.500 4l1.200-2.500h8.600l1.200 2.500z" fill="#dcdcdc"/><rect x="1.800" y="3.800" width="12.400" height="1.800" fill="#c2c2c2"/><rect x="1.800" y="5.200" width="12.400" height="4" rx=".6" fill="#2e2e2e"/><rect x="10.800" y="6.600" width="2" height="1.200" fill="#3fdc3f"/><path d="M6.700 9.200h2.600v3h-2.600z" fill="#35b558"/><path d="M1.800 13h12.400v2.200h-12.400z" fill="#3cc463"/><path d="M5.500 12h5v3.200h-5z" fill="#2fa850"/></svg>
<span class="t" style="top:329px;line-height:16px;font-size:11.52px;color:#000;letter-spacing:0.108px;left:53.5px;">PR-Daten (\\DiskStation) (P:)</span>
<svg class="a" style="left:32px;top:353.5px;" width="16" height="16" viewBox="0 0 16 16"><path d="M2.500 4l1.200-2.500h8.600l1.200 2.500z" fill="#dcdcdc"/><rect x="1.800" y="3.800" width="12.400" height="1.800" fill="#c2c2c2"/><rect x="1.800" y="5.200" width="12.400" height="4" rx=".6" fill="#2e2e2e"/><rect x="10.800" y="6.600" width="2" height="1.200" fill="#3fdc3f"/><path d="M6.700 9.200h2.600v3h-2.600z" fill="#35b558"/><path d="M1.800 13h12.400v2.200h-12.400z" fill="#3cc463"/><path d="M5.500 12h5v3.200h-5z" fill="#2fa850"/></svg>
<span class="t" style="top:353px;line-height:16px;font-size:11.52px;color:#000;letter-spacing:0.175px;left:53.5px;">IB-Daten (\\diskstation) (S:)</span>
<svg class="a" style="left:32px;top:377.5px;" width="16" height="16" viewBox="0 0 16 16"><path d="M2.500 4l1.200-2.500h8.600l1.200 2.500z" fill="#dcdcdc"/><rect x="1.800" y="3.800" width="12.400" height="1.800" fill="#c2c2c2"/><rect x="1.800" y="5.200" width="12.400" height="4" rx=".6" fill="#2e2e2e"/><rect x="10.800" y="6.600" width="2" height="1.200" fill="#3fdc3f"/><path d="M6.700 9.200h2.600v3h-2.600z" fill="#35b558"/><path d="M1.800 13h12.400v2.200h-12.400z" fill="#3cc463"/><path d="M5.500 12h5v3.200h-5z" fill="#2fa850"/></svg>
<span class="t" style="top:377px;line-height:16px;font-size:11.52px;color:#000;letter-spacing:0.287px;left:53.5px;">MB-Daten (\\diskstation) (Z:)</span>
<svg class="a" style="left:23.5px;top:409.5px;" width="18" height="16" viewBox="0 0 18 16"><circle cx="11.500" cy="6.200" r="6" fill="url(#gnet)"/><path d="M7.500 3c2 1.500 3.500 0 5 1s2.500 3 4.500 2.500M8 9c2-1 3.500 1 5.500 0" stroke="#d4ecfb" fill="none" stroke-width="1.200" opacity=".85"/><rect x=".7" y="7.200" width="11" height="6.800" fill="#4aa8f0" stroke="#dfe8f0" stroke-width=".9"/><path d="M1.200 7.700h10v3l-10 2.500z" fill="#7fc6fa" opacity=".7"/><path d="M4 15.700h4.500M6.200 14v1.700" stroke="#93a3b3" stroke-width="1"/></svg>
<span class="t" style="top:409px;line-height:16px;font-size:11.52px;color:#000;letter-spacing:0.124px;left:45px;">Netzwerk</span>
<svg class="a" style="left:32px;top:433.5px;" width="16" height="16" viewBox="0 0 16 16"><rect x=".5" y="1" width="15" height="10" fill="url(#gpc)" stroke="#e4eaf0"/><rect x=".2" y=".7" width="15.600" height="10.600" fill="none" stroke="#9aa8b8" stroke-width=".4"/><path d="M6.500 11.500h3v1.800h-3z" fill="#c4ccd6"/><path d="M4.500 13.300h7" stroke="#c4ccd6" stroke-width=".8"/><path d="M.5 15h15" stroke="#b4c0ce" stroke-width="1.100"/></svg>
<span class="t" style="top:433px;line-height:16px;font-size:11.52px;color:#000;letter-spacing:-0.359px;left:53.5px;">192.168.178.1</span>
<svg class="a" style="left:32px;top:457.5px;" width="16" height="16" viewBox="0 0 16 16"><rect x=".5" y="1" width="15" height="10" fill="url(#gpc)" stroke="#e4eaf0"/><rect x=".2" y=".7" width="15.600" height="10.600" fill="none" stroke="#9aa8b8" stroke-width=".4"/><path d="M6.500 11.500h3v1.800h-3z" fill="#c4ccd6"/><path d="M4.500 13.300h7" stroke="#c4ccd6" stroke-width=".8"/><path d="M.5 15h15" stroke="#b4c0ce" stroke-width="1.100"/></svg>
<span class="t" style="top:457px;line-height:16px;font-size:11.52px;color:#000;letter-spacing:-0.594px;left:53.5px;">DESKTOP-IUPA6ST</span>
</div></div>
<div class="a" style="left:401px;top:181px;width:16px;height:283px;background:#f0f0f0;border-right:1px solid #f6f6f6;"></div>
<div class="a" style="left:401px;top:290px;width:15px;height:129px;background:#cdcdcd;"></div>
<svg class="a" style="left:404px;top:186px" width="9" height="8"><path d="M1 6l3.500-3.500 3.500 3.500" fill="none" stroke="#404040" stroke-width="1.600"/></svg>
<svg class="a" style="left:404px;top:451px" width="9" height="8"><path d="M1 2l3.500 3.500 3.500-3.500" fill="none" stroke="#404040" stroke-width="1.600"/></svg>
<div class="a" style="left:419px;top:181px;width:1px;height:283px;background:#f7f7f7;"></div>
<span class="t" style="top:186px;line-height:16px;font-size:11.52px;color:#4c607a;letter-spacing:0.068px;left:438.5px;">Name</span>
<span class="t" style="top:186px;line-height:16px;font-size:11.52px;color:#4c607a;letter-spacing:0.304px;left:699px;">Änderungsdatum</span>
<span class="t" style="top:186px;line-height:16px;font-size:11.52px;color:#4c607a;letter-spacing:-0.068px;left:843.5px;">Typ</span>
<span class="t" style="top:186px;line-height:16px;font-size:11.52px;color:#4c607a;letter-spacing:-0.130px;left:963.5px;">Größe</span>
<div class="a" style="left:692px;top:181px;width:1px;height:25px;background:#e5e5e5;"></div>
<div class="a" style="left:836px;top:181px;width:1px;height:25px;background:#e5e5e5;"></div>
<div class="a" style="left:956px;top:181px;width:1px;height:25px;background:#e5e5e5;"></div>
<div class="a" style="left:1036px;top:181px;width:1px;height:25px;background:#e5e5e5;"></div>
<svg class="a" style="left:557.5px;top:181px" width="10" height="6"><path d="M1 5l4-4 4 4" fill="none" stroke="#8a8a8a" stroke-width="1"/></svg>
<div class="a" style="left:441.5px;top:206px;width:12px;height:1.5px;background:#f5d67a;"></div>
<svg class="a" style="left:439px;top:213px;" width="16" height="16" viewBox="0 0 16 16"><path d="M2.500 .5h11v15h-11z" fill="url(#gfo)" stroke="#ebc84e"/><path d="M12.500 15.500v-5a1 1 0 0 1 2 0v5z" fill="#ffe694" stroke="#e9c444"/></svg>
<span class="t" style="top:214px;line-height:16px;font-size:11.52px;color:#000;letter-spacing:-0.452px;left:459px;">src</span>
<span class="t" style="top:214px;line-height:16px;font-size:11.52px;color:#6d6d6d;letter-spacing:-0.355px;left:699px;">28.10.2025 16:05</span>
<span class="t" style="top:214px;line-height:16px;font-size:11.52px;color:#6d6d6d;letter-spacing:0.164px;left:843.5px;">Dateiordner</span>
<svg class="a" style="left:439px;top:234px;" width="16" height="16" viewBox="0 0 16 16"><path d="M2.500 .5h11v15h-11z" fill="url(#gfo)" stroke="#ebc84e"/><path d="M12.500 15.500v-5a1 1 0 0 1 2 0v5z" fill="#ffe694" stroke="#e9c444"/></svg>
<span class="t" style="top:235px;line-height:16px;font-size:11.52px;color:#000;letter-spacing:0.108px;left:459px;">test</span>
<span class="t" style="top:235px;line-height:16px;font-size:11.52px;color:#6d6d6d;letter-spacing:-0.355px;left:699px;">28.10.2025 16:05</span>
<span class="t" style="top:235px;line-height:16px;font-size:11.52px;color:#6d6d6d;letter-spacing:0.164px;left:843.5px;">Dateiordner</span>
<svg class="a" style="left:439px;top:255px;" width="16" height="16" viewBox="0 0 16 16"><path d="M5.200 3.500h10.300l-.6 11.500h-10.500z" fill="#fdfdfd" stroke="#c9b78c" stroke-width=".8"/><path d="M3.600 2.600h11.300l-1.800 11.100h-12.200z" fill="#8ecbe2"/><path d="M3.600 2.600h11.300l-1.800 11.100h-12.200z" fill="none" stroke="#5fa9c8" stroke-width=".7"/><path d="M3.300 4.500h11.200M3 6.300h11.200M2.600 8.100h11.200M2.300 9.900h11.200M2 11.700h11.200" stroke="#c4e6f2" stroke-width=".7"/><path d="M4 1.700h10.600" stroke="#4a4a4a" stroke-width="1.700" stroke-dasharray=".9 .7"/></svg>
<span class="t" style="top:256px;line-height:16px;font-size:11.52px;color:#000;letter-spacing:0.361px;left:459px;">.gitignore</span>
<span class="t" style="top:256px;line-height:16px;font-size:11.52px;color:#6d6d6d;letter-spacing:-0.355px;left:699px;">28.10.2025 16:05</span>
<span class="t" style="top:256px;line-height:16px;font-size:11.52px;color:#6d6d6d;letter-spacing:-0.291px;left:843.5px;">GITIGNORE-Datei</span>
<span class="t" style="top:256px;line-height:16px;font-size:11.52px;color:#6d6d6d;letter-spacing:-0.494px;left:628.994px;width:400px;text-align:right;">1 KB</span>
<svg class="a" style="left:439px;top:276px;" width="16" height="16" viewBox="0 0 16 16"><path d="M2.500 .5h7.500l3.500 3.500v11.500h-11z" fill="#fcfcfc" stroke="#8c8c8c"/><path d="M10 .5v3.500h3.500" fill="none" stroke="#8c8c8c"/><path d="M4.500 4.500h4M4.500 6.500h7M4.500 8.500h7M4.500 10.500h7M4.500 12.500h7" stroke="#8f8f8f" stroke-width="1"/></svg>
<span class="t" style="top:277px;line-height:16px;font-size:11.52px;color:#000;letter-spacing:0.281px;left:459px;">.gitmodules</span>
<span class="t" style="top:277px;line-height:16px;font-size:11.52px;color:#6d6d6d;letter-spacing:-0.355px;left:699px;">28.10.2025 16:05</span>
<span class="t" style="top:277px;line-height:16px;font-size:11.52px;color:#6d6d6d;letter-spacing:0.250px;left:843.5px;">Textdokument</span>
<span class="t" style="top:277px;line-height:16px;font-size:11.52px;color:#6d6d6d;letter-spacing:-0.494px;left:628.994px;width:400px;text-align:right;">1 KB</span>
<svg class="a" style="left:439px;top:297px;" width="16" height="16" viewBox="0 0 16 16"><path d="M2.500 .5h7.500l3.500 3.500v11.500h-11z" fill="#fbfbfb" stroke="#8c8c8c"/><path d="M10 .5v3.500h3.500" fill="none" stroke="#8c8c8c"/></svg>
<span class="t" style="top:298px;line-height:16px;font-size:11.52px;color:#000;letter-spacing:0.222px;left:459px;">.gitpod.Dockerfile</span>
<span class="t" style="top:298px;line-height:16px;font-size:11.52px;color:#6d6d6d;letter-spacing:-0.355px;left:699px;">28.10.2025 16:05</span>
<span class="t" style="top:298px;line-height:16px;font-size:11.52px;color:#6d6d6d;letter-spacing:-0.459px;left:843.5px;">DOCKERFILE-Datei</span>
<span class="t" style="top:298px;line-height:16px;font-size:11.52px;color:#6d6d6d;letter-spacing:-0.494px;left:628.994px;width:400px;text-align:right;">1 KB</span>
<svg class="a" style="left:439px;top:318px;" width="16" height="16" viewBox="0 0 16 16"><path d="M2.500 .5h7.500l3.500 3.500v11.500h-11z" fill="#fbfbfb" stroke="#8c8c8c"/><path d="M10 .5v3.500h3.500" fill="none" stroke="#8c8c8c"/></svg>
<span class="t" style="top:319px;line-height:16px;font-size:11.52px;color:#000;letter-spacing:0.391px;left:459px;">.gitpod.yml</span>
<span class="t" style="top:319px;line-height:16px;font-size:11.52px;color:#6d6d6d;letter-spacing:-0.355px;left:699px;">28.10.2025 16:05</span>
<span class="t" style="top:319px;line-height:16px;font-size:11.52px;color:#6d6d6d;letter-spacing:0.176px;left:843.5px;">YML-Datei</span>
<span class="t" style="top:319px;line-height:16px;font-size:11.52px;color:#6d6d6d;letter-spacing:-0.494px;left:628.994px;width:400px;text-align:right;">1 KB</span>
<svg class="a" style="left:439px;top:339px;" width="16" height="16" viewBox="0 0 16 16"><path d="M2.500 .5h7.500l3.500 3.500v11.500h-11z" fill="#fbfbfb" stroke="#8c8c8c"/><path d="M10 .5v3.500h3.500" fill="none" stroke="#8c8c8c"/></svg>
<span class="t" style="top:340px;line-height:16px;font-size:11.52px;color:#000;letter-spacing:0.105px;left:459px;">.travis.yml</span>
<span class="t" style="top:340px;line-height:16px;font-size:11.52px;color:#6d6d6d;letter-spacing:-0.355px;left:699px;">28.10.2025 16:05</span>
<span class="t" style="top:340px;line-height:16px;font-size:11.52px;color:#6d6d6d;letter-spacing:0.176px;left:843.5px;">YML-Datei</span>
<span class="t" style="top:340px;line-height:16px;font-size:11.52px;color:#6d6d6d;letter-spacing:-0.494px;left:628.994px;width:400px;text-align:right;">1 KB</span>
<svg class="a" style="left:439px;top:360px;" width="16" height="16" viewBox="0 0 16 16"><path d="M2.500 .5h7.500l3.500 3.500v11.500h-11z" fill="#fbfbfb" stroke="#8c8c8c"/><path d="M10 .5v3.500h3.500" fill="none" stroke="#8c8c8c"/></svg>
<span class="t" style="top:361px;line-height:16px;font-size:11.52px;color:#000;letter-spacing:-0.900px;left:459px;">LICENSE</span>
<span class="t" style="top:361px;line-height:16px;font-size:11.52px;color:#6d6d6d;letter-spacing:-0.355px;left:699px;">28.10.2025 16:05</span>
<span class="t" style="top:361px;line-height:16px;font-size:11.52px;color:#6d6d6d;letter-spacing:-0.069px;left:843.5px;">Datei</span>
<span class="t" style="top:361px;line-height:16px;font-size:11.52px;color:#6d6d6d;letter-spacing:-0.476px;left:628.976px;width:400px;text-align:right;">35 KB</span>
<svg class="a" style="left:439px;top:381px;" width="16" height="16" viewBox="0 0 16 16"><path d="M2.500 .5h7.500l3.500 3.500v11.500h-11z" fill="#fbfbfb" stroke="#8c8c8c"/><path d="M10 .5v3.500h3.500" fill="none" stroke="#8c8c8c"/></svg>
<span class="t" style="top:382px;line-height:16px;font-size:11.52px;color:#000;letter-spacing:0.263px;left:459px;">Makefile</span>
<span class="t" style="top:382px;line-height:16px;font-size:11.52px;color:#6d6d6d;letter-spacing:-0.355px;left:699px;">28.10.2025 16:05</span>
<span class="t" style="top:382px;line-height:16px;font-size:11.52px;color:#6d6d6d;letter-spacing:-0.069px;left:843.5px;">Datei</span>
<span class="t" style="top:382px;line-height:16px;font-size:11.52px;color:#6d6d6d;letter-spacing:-0.494px;left:628.994px;width:400px;text-align:right;">6 KB</span>
<svg class="a" style="left:439px;top:402px;" width="16" height="16" viewBox="0 0 16 16"><path d="M5.200 3.500h10.300l-.6 11.500h-10.500z" fill="#fdfdfd" stroke="#c9b78c" stroke-width=".8"/><path d="M3.600 2.600h11.300l-1.800 11.100h-12.200z" fill="#8ecbe2"/><path d="M3.600 2.600h11.300l-1.800 11.100h-12.200z" fill="none" stroke="#5fa9c8" stroke-width=".7"/><path d="M3.300 4.500h11.200M3 6.300h11.200M2.600 8.100h11.200M2.300 9.900h11.200M2 11.700h11.200" stroke="#c4e6f2" stroke-width=".7"/><path d="M4 1.700h10.600" stroke="#4a4a4a" stroke-width="1.700" stroke-dasharray=".9 .7"/></svg>
<span class="t" style="top:403px;line-height:16px;font-size:11.52px;color:#000;letter-spacing:-0.277px;left:459px;">README.md</span>
<span class="t" style="top:403px;line-height:16px;font-size:11.52px;color:#6d6d6d;letter-spacing:-0.355px;left:699px;">28.10.2025 16:05</span>
<span class="t" style="top:403px;line-height:16px;font-size:11.52px;color:#6d6d6d;letter-spacing:0.294px;left:843.5px;">MD-Datei</span>
<span class="t" style="top:403px;line-height:16px;font-size:11.52px;color:#6d6d6d;letter-spacing:-0.494px;left:628.994px;width:400px;text-align:right;">3 KB</span>
<svg class="a" style="left:439px;top:423px;" width="16" height="16" viewBox="0 0 16 16"><path d="M5.200 3.500h10.300l-.6 11.500h-10.500z" fill="#fdfdfd" stroke="#c9b78c" stroke-width=".8"/><path d="M3.600 2.600h11.300l-1.800 11.100h-12.200z" fill="#8ecbe2"/><path d="M3.600 2.600h11.300l-1.800 11.100h-12.200z" fill="none" stroke="#5fa9c8" stroke-width=".7"/><path d="M3.300 4.500h11.200M3 6.300h11.200M2.600 8.100h11.200M2.300 9.900h11.200M2 11.700h11.200" stroke="#c4e6f2" stroke-width=".7"/><path d="M4 1.700h10.600" stroke="#4a4a4a" stroke-width="1.700" stroke-dasharray=".9 .7"/></svg>
<span class="t" style="top:424px;line-height:16px;font-size:11.52px;color:#000;letter-spacing:0.037px;left:459px;">sinus.cbp</span>
<span class="t" style="top:424px;line-height:16px;font-size:11.52px;color:#6d6d6d;letter-spacing:-0.355px;left:699px;">28.10.2025 16:05</span>
<span class="t" style="top:424px;line-height:16px;font-size:11.52px;color:#6d6d6d;letter-spacing:-0.157px;left:843.5px;">CBP-Datei</span>
<span class="t" style="top:424px;line-height:16px;font-size:11.52px;color:#6d6d6d;letter-spacing:-0.494px;left:628.994px;width:400px;text-align:right;">9 KB</span>
<div class="a" style="left:435px;top:442px;width:598px;height:21px;background:#cce8ff;border:1px solid #99d1ff;"></div>
<svg class="a" style="left:439px;top:444px;" width="16" height="16" viewBox="0 0 16 16"><path d="M5.200 3.500h10.300l-.6 11.500h-10.500z" fill="#fdfdfd" stroke="#c9b78c" stroke-width=".8"/><path d="M3.600 2.600h11.300l-1.800 11.100h-12.200z" fill="#8ecbe2"/><path d="M3.600 2.600h11.300l-1.800 11.100h-12.200z" fill="none" stroke="#5fa9c8" stroke-width=".7"/><path d="M3.300 4.500h11.200M3 6.300h11.200M2.600 8.100h11.200M2.300 9.900h11.200M2 11.700h11.200" stroke="#c4e6f2" stroke-width=".7"/><path d="M4 1.700h10.600" stroke="#4a4a4a" stroke-width="1.700" stroke-dasharray=".9 .7"/></svg>
<span class="t" style="top:445px;line-height:16px;font-size:11.52px;color:#000;letter-spacing:-0.083px;left:459px;">stm32_sine.ld</span>
<span class="t" style="top:445px;line-height:16px;font-size:11.52px;color:#6d6d6d;letter-spacing:-0.355px;left:699px;">28.10.2025 16:05</span>
<span class="t" style="top:445px;line-height:16px;font-size:11.52px;color:#6d6d6d;letter-spacing:0.068px;left:843.5px;">LD-Datei</span>
<span class="t" style="top:445px;line-height:16px;font-size:11.52px;color:#6d6d6d;letter-spacing:-0.494px;left:628.994px;width:400px;text-align:right;">2 KB</span>
<div class="a" style="left:1093px;top:181px;width:16px;height:283px;background:#f0f0f0;border-right:1px solid #f6f6f6;"></div>
<div class="a" style="left:1093px;top:277px;width:15px;height:170px;background:#cdcdcd;"></div>
<svg class="a" style="left:1096px;top:186px" width="9" height="8"><path d="M1 6l3.500-3.500 3.500 3.500" fill="none" stroke="#404040" stroke-width="1.600"/></svg>
<svg class="a" style="left:1096px;top:451px" width="9" height="8"><path d="M1 2l3.500 3.500 3.500-3.500" fill="none" stroke="#404040" stroke-width="1.600"/></svg>
<div class="a" style="left:1110px;top:181px;width:1px;height:283px;background:#f0f0f0;"></div>
<span class="t" style="top:315px;line-height:16px;font-size:11.52px;color:#6d6d6d;letter-spacing:-0.026px;left:1048.51px;width:400px;text-align:center;">Es ist keine Vorschau verfügbar.</span>
<span class="t" style="top:468px;line-height:16px;font-size:11.52px;color:#1e395b;letter-spacing:-0.153px;left:15px;">18 Elemente</span>
<div class="a" style="left:88px;top:469px;width:1px;height:15px;background:#ececec;"></div>
<span class="t" style="top:468px;line-height:16px;font-size:11.52px;color:#1e395b;letter-spacing:-0.074px;left:100px;">1 Element ausgewählt (1,04 KB)</span>
<div class="a" style="left:272px;top:469px;width:1px;height:15px;background:#ececec;"></div>
<div class="a" style="left:1338px;top:464px;width:22px;height:23px;background:#cfe6f5;border:1px solid #2a98d8;"></div>
<svg class="a" style="left:1341px;top:468px" width="18" height="15"><g fill="#fff" stroke="#8a8a8a" stroke-width="1"><rect x="1.500" y="1.500" width="4" height="12"/></g><path d="M1.500 5.500h4M1.500 9.500h4" stroke="#8a8a8a"/><rect x="3" y="3" width="1" height="1" fill="#2a7a4a"/><rect x="3" y="7" width="1" height="1" fill="#3a6ae0"/><rect x="3" y="11" width="1" height="1" fill="#e02a2a"/><path d="M7 3.500h4M13 3.500h4M7 7.500h4M13 7.500h4M7 11.500h4M13 11.500h4" stroke="#6a6a6a"/></svg>
<svg class="a" style="left:1364px;top:469px" width="14" height="11"><rect x=".5" y=".5" width="13" height="10" fill="#fff" stroke="#9a9a9a"/><rect x="2" y="2" width="10" height="7" fill="#4a8ae0"/><path d="M2 9v-2.500c3-3 5 0 10-2v4.500z" fill="#4a7a6a"/><path d="M5 2h7v3c-3 1-5-1-7-3z" fill="#bfe0f8" opacity=".8"/></svg></div>
<div class="a" style="left:0px;top:1010px;width:1680px;height:40px;background:#101111;"></div>
<svg class="a" style="left:16px;top:1022px" width="16" height="16" fill="#fff"><path d="M0 2.300l6.500-.9v6.100h-6.500zM7.500 1.200l8.500-1.200v7.500h-8.500zM0 8.500h6.500v6.100l-6.500-.9zM7.500 8.500h8.500v7.500l-8.500-1.200z"/></svg>
<div class="a" style="left:48px;top:1011px;width:288px;height:39px;background:#f3f3f3;"></div>
<svg class="a" style="left:59px;top:1021px" width="18" height="18" fill="none" stroke="#1a1a1a" stroke-width="1.300"><circle cx="11" cy="7" r="5.300"/><path d="M7 11l-6 6"/></svg>
<span class="t" style="top:1021px;line-height:20px;font-size:14.4px;color:#2a2a2a;letter-spacing:-0.307px;left:88px;">Suchen</span>
<svg class="a" style="left:351px;top:1021px" width="18" height="18" fill="none" stroke="#fff" stroke-width="1.400"><rect x="2.500" y="4.500" width="9" height="8"/><path d="M1 1.500h12M1 15.500h12M15.500 3v2M15.500 7.500v6"/></svg>
<div class="a" style="left:436px;top:1010px;width:45px;height:40px;background:#3b3b3b;"></div>
<div class="a" style="left:481px;top:1010px;width:3px;height:40px;background:#2c2c2c;"></div>
<div class="a" style="left:975px;top:1010px;width:48px;height:40px;background:#b4641e;"></div>
<div class="a" style="left:391px;top:1048px;width:40px;height:2px;background:#e8707e;"></div>
<div class="a" style="left:436px;top:1048px;width:48px;height:2px;background:#e8707e;"></div>
<div class="a" style="left:685px;top:1048px;width:39px;height:2px;background:#e8707e;"></div>
<div class="a" style="left:718px;top:1048px;width:6px;height:2px;background:#c4525f;"></div>
<div class="a" style="left:717px;top:1048px;width:1px;height:2px;background:#101111;"></div>
<div class="a" style="left:734px;top:1048px;width:39px;height:2px;background:#e8707e;"></div>
<div class="a" style="left:767px;top:1048px;width:6px;height:2px;background:#c4525f;"></div>
<div class="a" style="left:766px;top:1048px;width:1px;height:2px;background:#101111;"></div>
<div class="a" style="left:783px;top:1048px;width:39px;height:2px;background:#e8707e;"></div>
<div class="a" style="left:816px;top:1048px;width:6px;height:2px;background:#c4525f;"></div>
<div class="a" style="left:815px;top:1048px;width:1px;height:2px;background:#101111;"></div>
<div class="a" style="left:832px;top:1048px;width:40px;height:2px;background:#e8707e;"></div>
<div class="a" style="left:866px;top:1048px;width:6px;height:2px;background:#c4525f;"></div>
<div class="a" style="left:865px;top:1048px;width:1px;height:2px;background:#101111;"></div>
<div class="a" style="left:881px;top:1048px;width:40px;height:2px;background:#e8707e;"></div>
<div class="a" style="left:915px;top:1048px;width:6px;height:2px;background:#c4525f;"></div>
<div class="a" style="left:914px;top:1048px;width:1px;height:2px;background:#101111;"></div>
<div class="a" style="left:930px;top:1048px;width:40px;height:2px;background:#e8707e;"></div>
<div class="a" style="left:964px;top:1048px;width:6px;height:2px;background:#c4525f;"></div>
<div class="a" style="left:963px;top:1048px;width:1px;height:2px;background:#101111;"></div>
<div class="a" style="left:975px;top:1048px;width:48px;height:2px;background:#f07818;"></div>
<svg class="a" style="left:399px;top:1018px" width="24" height="24" viewBox="0 0 24 24"><defs><linearGradient id="ge" x1="0" y1="0" x2="0" y2="1"><stop offset="0" stop-color="#2aa7e8"/><stop offset="1" stop-color="#0c4fa0"/></linearGradient><linearGradient id="gg" x1="0" y1="1" x2="1" y2="0"><stop offset="0" stop-color="#1fa0e6"/><stop offset=".55" stop-color="#35c6c8"/><stop offset="1" stop-color="#62dc5c"/></linearGradient></defs><circle cx="12" cy="12" r="11.800" fill="url(#ge)"/><path d="M.5 10.500C1.500 4.500 6.500 .2 12 .2c7 0 11.800 5.500 11.800 10.800h-8.600c0-2.200-2.200-3.800-4.700-3.800-4.500 0-8.500 3-10 6.300z" fill="url(#gg)"/><path d="M9 9.500c-2.500 2.500-2.500 8 1 11 3 2.500 7.500 2.500 11 .5-4 .5-8-.5-10-3.500-1.500-2.500-1.500-5.500-2-8z" fill="#0a3d86" opacity=".7"/><path d="M24.500 11h-8.800c.1 2-1 2.600-.8 3.900.3 2 4 3 7.200 1.600 1.200-.6 2.400-2 2.400-5.500z" fill="#101111"/></svg>
<svg class="a" style="left:447px;top:1018px" width="24" height="24" viewBox="0 0 24 24"><path d="M1 4h8l2 2.500h12v14.500h-22z" fill="#f6b93b"/><path d="M1 8.500h22v12.500h-22z" fill="#ffd766"/><path d="M5 13.500h14v7.500h-14z" fill="#3a96dd"/><path d="M8.500 17h7v4h-7z" fill="#ffd766"/></svg>
<svg class="a" style="left:496.5px;top:1018px" width="24" height="24" viewBox="0 0 24 24"><rect x="2" y="5" width="20" height="15" fill="#f4f4f4" stroke="#c8c8c8"/><rect x="2" y="5" width="20" height="2.500" fill="#d8d8d8"/><rect x="8" y="9" width="7" height="9" fill="#0a78d7"/><path d="M4 10h3M4 12.500h3M4 15h3M16.500 10h4M16.500 12.500h4M16.500 15h4" stroke="#8a8a8a"/></svg>
<svg class="a" style="left:545px;top:1018px" width="24" height="24" viewBox="0 0 24 24"><rect x="2" y="2" width="18" height="14" fill="#7fa8d8" stroke="#c8d4e4"/><rect x="4" y="4" width="14" height="10" fill="#3a5f9a"/><path d="M5 6h5M5 8.500h8M11 6h6M5 11h6" stroke="#cfe0f4"/><rect x="7" y="15" width="16" height="6" fill="#3c9a4a" stroke="#9ad0a0"/><path d="M9 16.500v3M11.500 16.500v3M14 16.500v3M16.500 16.500v3M19 16.500v3" stroke="#1a4a20" stroke-width="1.300"/><path d="M4 19l4 3" stroke="#3070d0" stroke-width="1.500"/></svg>
<svg class="a" style="left:594px;top:1018px" width="24" height="24" viewBox="0 0 24 24"><rect x="11" y="2" width="11" height="10" fill="#9cc0f0" stroke="#d0dcf0"/><path d="M13 14h8l2 3h-12z" fill="#8a9ac0"/><ellipse cx="19" cy="16" rx="3" ry="3.500" fill="#b0b8d8" stroke="#7a86b0"/><path d="M2 13l9-3 4 6-9 5z" fill="#f0c020"/><path d="M2 13l4 8v-3l-4-7z" fill="#c89010"/><ellipse cx="8" cy="12" rx="4.500" ry="2.500" fill="#f8d850" stroke="#c89010"/><path d="M4 17l6 1.500" stroke="#4a78c8" stroke-width="2"/></svg>
<svg class="a" style="left:643px;top:1018px" width="24" height="24" viewBox="0 0 24 24"><rect x="4" y="1.500" width="16" height="21" rx="1" fill="#6a7886" stroke="#8e9aa8"/><rect x="6" y="3.500" width="12" height="5" fill="#4cc2f0"/><g fill="#dfe6ee"><rect x="6" y="10.500" width="3" height="3"/><rect x="10.500" y="10.500" width="3" height="3"/><rect x="15" y="10.500" width="3" height="3"/><rect x="6" y="14.500" width="3" height="3"/><rect x="10.500" y="14.500" width="3" height="3"/><rect x="15" y="14.500" width="3" height="7"/><rect x="6" y="18.500" width="3" height="3"/><rect x="10.500" y="18.500" width="3" height="3"/></g></svg>
<svg class="a" style="left:692px;top:1018px" width="24" height="24" viewBox="0 0 24 24"><path d="M6 10h17v12h-20v-4z" fill="#f0f0f0"/><path d="M9 1.500h5l7 18h-5l-1.500-4h-7l-1.500 5h-4.500z" fill="#d81e28"/><path d="M9 1.500l2.500 6-5.500 14h-4.500z" fill="#a00c18"/><path d="M9 12.500h5l-2.500-6z" fill="#0d0e0e"/><path d="M17.500 22v-4l1.500 3 1.500-3v4" fill="none" stroke="#222" stroke-width=".9"/></svg>
<svg class="a" style="left:741px;top:1018px" width="24" height="24" viewBox="0 0 24 24"><rect x="7" y="3" width="15" height="15" fill="#1a86d8"/><path d="M7 8h15M14.500 3v15" stroke="#0e5fa8" stroke-width=".6"/><rect x="1" y="5" width="12" height="12" fill="#0a64b8"/><ellipse cx="7" cy="11" rx="3" ry="3.500" fill="none" stroke="#fff" stroke-width="1.600"/><path d="M15.500 6.500l2.500 2 3.500-3.500" stroke="#fff" fill="none" stroke-width="1.200"/><rect x="12" y="14" width="11" height="8" fill="#f0c080"/><path d="M12 14l5.500 4.500 5.500-4.500" fill="none" stroke="#c88a40"/></svg>
<svg class="a" style="left:790px;top:1018px" width="24" height="24" viewBox="0 0 24 24"><rect x="2" y="4" width="20" height="15" fill="#1a86d8" stroke="#6ab8f0"/><circle cx="9" cy="11.500" r="4" fill="#fff"/><path d="M9 11.500v-4a4 4 0 0 1 4 4z" fill="#1a86d8"/><path d="M15 9h5M15 12h5M15 15h3" stroke="#fff" stroke-width="1.300"/></svg>
<svg class="a" style="left:839px;top:1018px" width="24" height="24" viewBox="0 0 24 24"><path d="M4.500 1.500h10l4 4v14h-14z" fill="#f6f6f6" stroke="#c0c0c0"/><path d="M6 5h8M6 7.500h10M6 10h10M6 12.500h5" stroke="#9a9a9a"/><path d="M2 3.500v16" stroke="#555" stroke-width="2" stroke-dasharray="1.500 1.500"/><path d="M14 9.500c3 0 3.500 1 3.500 2.500v2h-4c-2 0-2.500 1-2.500 3s.5 3 2 3h1v-1.500h3.500" fill="#3a78b0"/><path d="M11 14.500h6.500v-5c-5 0-6.500 0-6.500 2.500z" fill="#3a78b0"/><path d="M17.500 12h2c2 0 2.500 1 2.500 3s-.5 3-2.500 3h-2.500v2.500c0 1.500-.5 2.500-3.500 2.500s-3.500-1-3.500-2.500v-2.500h4v-.5h-3c0-2 0-3 3-3h3.500z" fill="#f8d040"/></svg>
<svg class="a" style="left:888px;top:1018px" width="24" height="24" viewBox="0 0 24 24"><rect x="2" y="4.500" width="20" height="15" rx="1" fill="#2a2a2a" stroke="#8a8a8a"/><rect x="2" y="4.500" width="20" height="2.500" fill="#6a6a6a"/><path d="M5 10l3.500 3-3.500 3" fill="none" stroke="#fff" stroke-width="1.500"/><path d="M10.500 16.500h5" stroke="#fff" stroke-width="1.500"/></svg>
<svg class="a" style="left:937px;top:1018px" width="24" height="24" viewBox="0 0 24 24"><ellipse cx="10" cy="14" rx="9.500" ry="8" fill="#d8e6f4" stroke="#9ab4d0"/><circle cx="5.500" cy="12" r="1.800" fill="#e04040"/><circle cx="9.500" cy="9.500" r="1.800" fill="#40a040"/><circle cx="5.500" cy="16.500" r="1.800" fill="#e0b020"/><circle cx="11" cy="18" r="1.800" fill="#3070d0"/><path d="M20 1l2.500 1.500-6 15-3 2 .5-3.500z" fill="#e88a30"/><path d="M19.500 1l3 1.500" stroke="#8a5a20" stroke-width="2"/></svg>
<svg class="a" style="left:987px;top:1018px" width="24" height="24" viewBox="0 0 24 24"><g transform="rotate(45 12 12)"><rect x="3.500" y="3.500" width="8" height="8" fill="#e66a6a"/><rect x="12.500" y="3.500" width="8" height="8" fill="#5ab86a"/><rect x="3.500" y="12.500" width="8" height="8" fill="#5a9ae8"/><rect x="12.500" y="12.500" width="8" height="8" fill="#e8d070"/></g><path d="M10 4.500v3c0 2 4 2 4 4.500v5M14 9.500c0-2 2-1.500 2-3.500" stroke="#8a3a1a" stroke-width="1.600" fill="none"/><circle cx="10" cy="4.500" r="1.300" fill="#8a3a1a"/><circle cx="16" cy="6" r="1.300" fill="#8a3a1a"/><circle cx="14" cy="17" r="1.300" fill="#8a3a1a"/></svg>
<svg class="a" style="left:1299px;top:1012px" width="26" height="28"><path d="M1 19h13M4 22h14M1 16h10" stroke="#8ab4e8" stroke-width="1.600"/><path d="M11 16c4 0 5-2 4-3.500M14 19c5 0 6-2 5-4M18 22c3 0 3 3 0 3" stroke="#8ab4e8" stroke-width="1.600" fill="none"/><circle cx="19" cy="11" r="5" fill="#d42a2a"/><circle cx="15" cy="21" r="4.500" fill="#a8c8ec" opacity=".9"/></svg>
<span class="t" style="top:1015px;line-height:16px;font-size:9.12px;color:#fff;letter-spacing:-0.072px;font-weight:700;left:1118.04px;width:400px;text-align:center;">4</span>
<span class="t" style="top:1020px;line-height:20px;font-size:13.44px;color:#fff;letter-spacing:-0.007px;left:1332px;">12°C</span>
<span class="t" style="top:1020px;line-height:20px;font-size:13.44px;color:#fff;letter-spacing:0.320px;left:1370px;">Windig</span>
<svg class="a" style="left:1437px;top:1020px" width="130" height="22" fill="none" stroke="#fff" stroke-width="1.200"><path d="M1.500 13.500l6-6 6 6"/><rect x="27.500" y="5.500" width="7" height="11" rx="2"/><circle cx="31" cy="10" r="1.800"/><path d="M35 8c2 1 2 5 0 6"/><rect x="49.500" y="5.500" width="12" height="8"/><path d="M52 17.500h8M56 13.500v4M47.500 4v8"/><path d="M72.500 9.500h2.500l3.500-3v10l-3.500-3h-2.500z"/><path d="M81 8.500c1 1 1 4 0 5M83.500 6.500c2 2 2 7 0 9" stroke="#9a9a9a"/><path d="M101 18c3-2 5-6 6-10s3-4 3-1-3 6-6 9c-2 2-4 1-2-2s5-5 9-6" /></svg>
<span class="t" style="top:1012px;line-height:16px;font-size:11.52px;color:#fff;letter-spacing:-0.366px;left:1393.18px;width:400px;text-align:center;">16:20</span>
<span class="t" style="top:1030px;line-height:16px;font-size:11.52px;color:#fff;letter-spacing:-0.366px;left:1393.18px;width:400px;text-align:center;">28.10.2025</span>
<svg class="a" style="left:1638px;top:1021px" width="20" height="20" fill="#fff"><path d="M1 1h15v12h-7l-4 4v-4h-4z"/><path d="M4 4.500h9M4 7h9M4 9.500h6" stroke="#0d0e0e"/><circle cx="14.500" cy="14" r="2.500" fill="none" stroke="#fff" stroke-width="1.200"/></svg>
<div class="a" style="left:1675px;top:1010px;width:1px;height:40px;background:#5a5a5a;"></div>
</body></html>
